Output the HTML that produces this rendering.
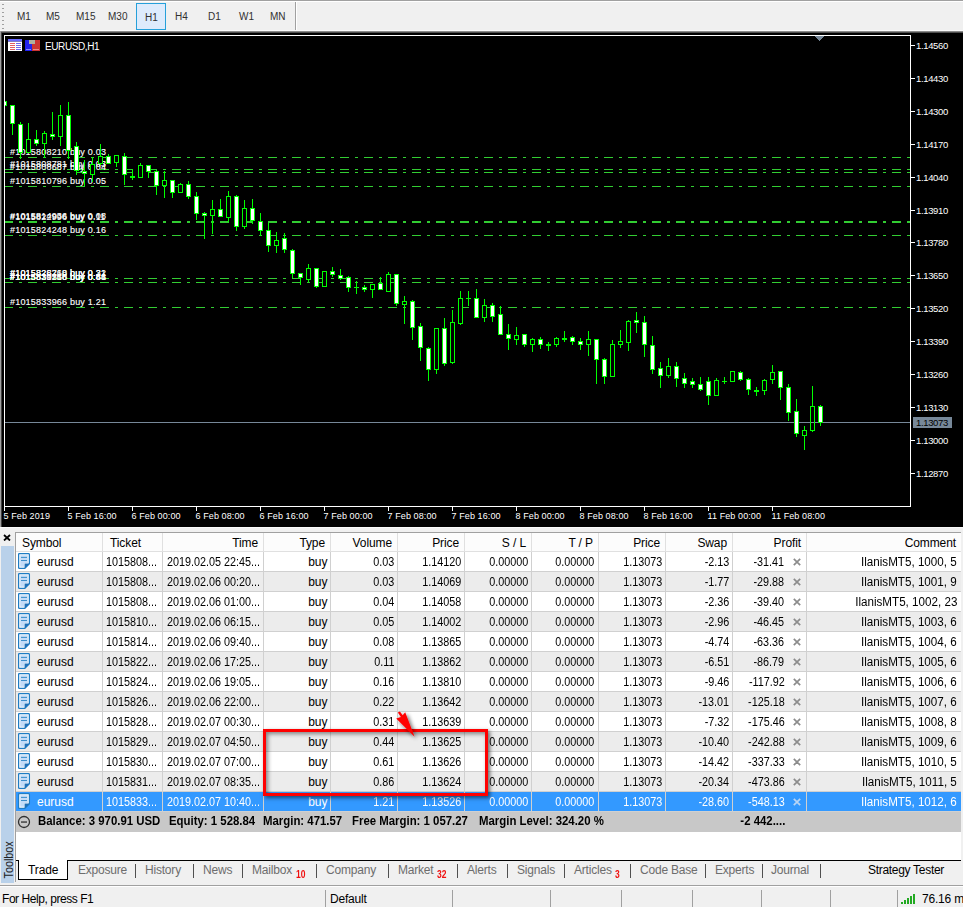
<!DOCTYPE html>
<html><head><meta charset="utf-8">
<style>
html,body{margin:0;padding:0;}
body{width:963px;height:907px;overflow:hidden;position:relative;background:#f0f0f0;font-family:"Liberation Sans",sans-serif;}
.abs{position:absolute;}
.tf{position:absolute;top:11px;font-size:10px;color:#303030;letter-spacing:0px;white-space:nowrap;}
svg text{font-family:"Liberation Sans",sans-serif;}
.lbl{font-size:9px;fill:#fff;letter-spacing:0.2px;stroke:#fff;stroke-width:0.12px;}
.ax{font-size:9.5px;fill:#fff;letter-spacing:-0.35px;}
.tx{font-size:9px;fill:#fff;letter-spacing:0.1px;}
.ttl{font-size:10px;fill:#fff;letter-spacing:-0.4px;}
.hdr{font-size:12px;color:#000;white-space:nowrap;letter-spacing:-0.1px;}
.cell{font-size:12px;white-space:nowrap;letter-spacing:-0.3px;}
.num{font-size:11px;white-space:nowrap;letter-spacing:-0.2px;}
.bal{font-size:11px;font-weight:bold;color:#000;white-space:nowrap;letter-spacing:0.25px;}
.xg{font-size:11px;font-weight:bold;}
.t12{font-size:12px;white-space:nowrap;}
.tab{position:absolute;top:863px;font-size:12px;color:#6d6d6d;letter-spacing:-0.2px;white-space:nowrap;}
.sep{position:absolute;top:864px;width:1px;height:14px;background:#505050;}
.sub{position:absolute;top:869px;font-size:10px;font-weight:bold;color:#f01010;transform:scaleX(0.85);transform-origin:0 0;}
.st{position:absolute;top:892px;font-size:12px;color:#000;letter-spacing:-0.45px;white-space:nowrap;}
.ssep{position:absolute;top:890px;width:1px;height:17px;background:#a0a0a0;}
</style></head><body>
<!-- toolbar -->
<div class="abs" style="left:0;top:0;width:963px;height:1px;background:#a0a0a0"></div>
<div class="abs" style="left:0;top:1px;width:963px;height:1px;background:#fff"></div>
<div class="abs" style="left:0;top:30px;width:963px;height:1px;background:#fafafa"></div>
<div class="abs" style="left:0;top:31px;width:963px;height:2px;background:linear-gradient(#a8a8a8,#303030)"></div>
<div class="abs" style="left:2px;top:4px;width:2px;height:25px;background:repeating-linear-gradient(#a0a0a0 0 1px,transparent 1px 4px)"></div>
<div class="abs" style="left:136px;top:3px;width:28px;height:25px;border:1px solid #26a0da;background:#ddebfc"></div>
<div class="abs" style="left:295px;top:2px;width:1px;height:28px;background:#a0a0a0"></div>
<div class="abs" style="left:296px;top:2px;width:1px;height:28px;background:#fff"></div>
<div class="tf" style="left:17px">M1</div>
<div class="tf" style="left:46px">M5</div>
<div class="tf" style="left:76px">M15</div>
<div class="tf" style="left:108px">M30</div>
<div class="tf" style="left:145px;top:12px">H1</div>
<div class="tf" style="left:175px">H4</div>
<div class="tf" style="left:208px">D1</div>
<div class="tf" style="left:239px">W1</div>
<div class="tf" style="left:270px">MN</div>
<!-- chart -->
<div class="abs" style="left:0;top:31px;width:1px;height:496px;background:#a0a0a0"></div>
<div class="abs" style="left:1px;top:33px;width:1px;height:494px;background:#404040"></div>
<svg class="abs" style="left:0;top:0" width="963" height="527" shape-rendering="crispEdges">
<defs><clipPath id="cp"><rect x="5" y="36" width="905" height="470"/></clipPath></defs>
<rect x="2" y="33" width="961" height="494" fill="#000"/>
<rect x="4" y="35" width="907" height="1" fill="#fff"/>
<rect x="4" y="506" width="907" height="1" fill="#fff"/>
<rect x="4" y="35" width="1" height="472" fill="#fff"/>
<rect x="910" y="35" width="1" height="472" fill="#fff"/>
<g clip-path="url(#cp)">
<g fill="#32cd32"><rect x="4" y="157" width="9" height="1"/><rect x="19" y="157" width="3" height="1"/><rect x="28" y="157" width="9" height="1"/><rect x="43" y="157" width="3" height="1"/><rect x="52" y="157" width="9" height="1"/><rect x="67" y="157" width="3" height="1"/><rect x="76" y="157" width="9" height="1"/><rect x="91" y="157" width="3" height="1"/><rect x="100" y="157" width="9" height="1"/><rect x="115" y="157" width="3" height="1"/><rect x="124" y="157" width="9" height="1"/><rect x="139" y="157" width="3" height="1"/><rect x="148" y="157" width="9" height="1"/><rect x="163" y="157" width="3" height="1"/><rect x="172" y="157" width="9" height="1"/><rect x="187" y="157" width="3" height="1"/><rect x="196" y="157" width="9" height="1"/><rect x="211" y="157" width="3" height="1"/><rect x="220" y="157" width="9" height="1"/><rect x="235" y="157" width="3" height="1"/><rect x="244" y="157" width="9" height="1"/><rect x="259" y="157" width="3" height="1"/><rect x="268" y="157" width="9" height="1"/><rect x="283" y="157" width="3" height="1"/><rect x="292" y="157" width="9" height="1"/><rect x="307" y="157" width="3" height="1"/><rect x="316" y="157" width="9" height="1"/><rect x="331" y="157" width="3" height="1"/><rect x="340" y="157" width="9" height="1"/><rect x="355" y="157" width="3" height="1"/><rect x="364" y="157" width="9" height="1"/><rect x="379" y="157" width="3" height="1"/><rect x="388" y="157" width="9" height="1"/><rect x="403" y="157" width="3" height="1"/><rect x="412" y="157" width="9" height="1"/><rect x="427" y="157" width="3" height="1"/><rect x="436" y="157" width="9" height="1"/><rect x="451" y="157" width="3" height="1"/><rect x="460" y="157" width="9" height="1"/><rect x="475" y="157" width="3" height="1"/><rect x="484" y="157" width="9" height="1"/><rect x="499" y="157" width="3" height="1"/><rect x="508" y="157" width="9" height="1"/><rect x="523" y="157" width="3" height="1"/><rect x="532" y="157" width="9" height="1"/><rect x="547" y="157" width="3" height="1"/><rect x="556" y="157" width="9" height="1"/><rect x="571" y="157" width="3" height="1"/><rect x="580" y="157" width="9" height="1"/><rect x="595" y="157" width="3" height="1"/><rect x="604" y="157" width="9" height="1"/><rect x="619" y="157" width="3" height="1"/><rect x="628" y="157" width="9" height="1"/><rect x="643" y="157" width="3" height="1"/><rect x="652" y="157" width="9" height="1"/><rect x="667" y="157" width="3" height="1"/><rect x="676" y="157" width="9" height="1"/><rect x="691" y="157" width="3" height="1"/><rect x="700" y="157" width="9" height="1"/><rect x="715" y="157" width="3" height="1"/><rect x="724" y="157" width="9" height="1"/><rect x="739" y="157" width="3" height="1"/><rect x="748" y="157" width="9" height="1"/><rect x="763" y="157" width="3" height="1"/><rect x="772" y="157" width="9" height="1"/><rect x="787" y="157" width="3" height="1"/><rect x="796" y="157" width="9" height="1"/><rect x="811" y="157" width="3" height="1"/><rect x="820" y="157" width="9" height="1"/><rect x="835" y="157" width="3" height="1"/><rect x="844" y="157" width="9" height="1"/><rect x="859" y="157" width="3" height="1"/><rect x="868" y="157" width="9" height="1"/><rect x="883" y="157" width="3" height="1"/><rect x="892" y="157" width="9" height="1"/><rect x="907" y="157" width="3" height="1"/></g>
<g fill="#32cd32"><rect x="4" y="169" width="9" height="1"/><rect x="19" y="169" width="3" height="1"/><rect x="28" y="169" width="9" height="1"/><rect x="43" y="169" width="3" height="1"/><rect x="52" y="169" width="9" height="1"/><rect x="67" y="169" width="3" height="1"/><rect x="76" y="169" width="9" height="1"/><rect x="91" y="169" width="3" height="1"/><rect x="100" y="169" width="9" height="1"/><rect x="115" y="169" width="3" height="1"/><rect x="124" y="169" width="9" height="1"/><rect x="139" y="169" width="3" height="1"/><rect x="148" y="169" width="9" height="1"/><rect x="163" y="169" width="3" height="1"/><rect x="172" y="169" width="9" height="1"/><rect x="187" y="169" width="3" height="1"/><rect x="196" y="169" width="9" height="1"/><rect x="211" y="169" width="3" height="1"/><rect x="220" y="169" width="9" height="1"/><rect x="235" y="169" width="3" height="1"/><rect x="244" y="169" width="9" height="1"/><rect x="259" y="169" width="3" height="1"/><rect x="268" y="169" width="9" height="1"/><rect x="283" y="169" width="3" height="1"/><rect x="292" y="169" width="9" height="1"/><rect x="307" y="169" width="3" height="1"/><rect x="316" y="169" width="9" height="1"/><rect x="331" y="169" width="3" height="1"/><rect x="340" y="169" width="9" height="1"/><rect x="355" y="169" width="3" height="1"/><rect x="364" y="169" width="9" height="1"/><rect x="379" y="169" width="3" height="1"/><rect x="388" y="169" width="9" height="1"/><rect x="403" y="169" width="3" height="1"/><rect x="412" y="169" width="9" height="1"/><rect x="427" y="169" width="3" height="1"/><rect x="436" y="169" width="9" height="1"/><rect x="451" y="169" width="3" height="1"/><rect x="460" y="169" width="9" height="1"/><rect x="475" y="169" width="3" height="1"/><rect x="484" y="169" width="9" height="1"/><rect x="499" y="169" width="3" height="1"/><rect x="508" y="169" width="9" height="1"/><rect x="523" y="169" width="3" height="1"/><rect x="532" y="169" width="9" height="1"/><rect x="547" y="169" width="3" height="1"/><rect x="556" y="169" width="9" height="1"/><rect x="571" y="169" width="3" height="1"/><rect x="580" y="169" width="9" height="1"/><rect x="595" y="169" width="3" height="1"/><rect x="604" y="169" width="9" height="1"/><rect x="619" y="169" width="3" height="1"/><rect x="628" y="169" width="9" height="1"/><rect x="643" y="169" width="3" height="1"/><rect x="652" y="169" width="9" height="1"/><rect x="667" y="169" width="3" height="1"/><rect x="676" y="169" width="9" height="1"/><rect x="691" y="169" width="3" height="1"/><rect x="700" y="169" width="9" height="1"/><rect x="715" y="169" width="3" height="1"/><rect x="724" y="169" width="9" height="1"/><rect x="739" y="169" width="3" height="1"/><rect x="748" y="169" width="9" height="1"/><rect x="763" y="169" width="3" height="1"/><rect x="772" y="169" width="9" height="1"/><rect x="787" y="169" width="3" height="1"/><rect x="796" y="169" width="9" height="1"/><rect x="811" y="169" width="3" height="1"/><rect x="820" y="169" width="9" height="1"/><rect x="835" y="169" width="3" height="1"/><rect x="844" y="169" width="9" height="1"/><rect x="859" y="169" width="3" height="1"/><rect x="868" y="169" width="9" height="1"/><rect x="883" y="169" width="3" height="1"/><rect x="892" y="169" width="9" height="1"/><rect x="907" y="169" width="3" height="1"/></g>
<g fill="#32cd32"><rect x="4" y="172" width="9" height="1"/><rect x="19" y="172" width="3" height="1"/><rect x="28" y="172" width="9" height="1"/><rect x="43" y="172" width="3" height="1"/><rect x="52" y="172" width="9" height="1"/><rect x="67" y="172" width="3" height="1"/><rect x="76" y="172" width="9" height="1"/><rect x="91" y="172" width="3" height="1"/><rect x="100" y="172" width="9" height="1"/><rect x="115" y="172" width="3" height="1"/><rect x="124" y="172" width="9" height="1"/><rect x="139" y="172" width="3" height="1"/><rect x="148" y="172" width="9" height="1"/><rect x="163" y="172" width="3" height="1"/><rect x="172" y="172" width="9" height="1"/><rect x="187" y="172" width="3" height="1"/><rect x="196" y="172" width="9" height="1"/><rect x="211" y="172" width="3" height="1"/><rect x="220" y="172" width="9" height="1"/><rect x="235" y="172" width="3" height="1"/><rect x="244" y="172" width="9" height="1"/><rect x="259" y="172" width="3" height="1"/><rect x="268" y="172" width="9" height="1"/><rect x="283" y="172" width="3" height="1"/><rect x="292" y="172" width="9" height="1"/><rect x="307" y="172" width="3" height="1"/><rect x="316" y="172" width="9" height="1"/><rect x="331" y="172" width="3" height="1"/><rect x="340" y="172" width="9" height="1"/><rect x="355" y="172" width="3" height="1"/><rect x="364" y="172" width="9" height="1"/><rect x="379" y="172" width="3" height="1"/><rect x="388" y="172" width="9" height="1"/><rect x="403" y="172" width="3" height="1"/><rect x="412" y="172" width="9" height="1"/><rect x="427" y="172" width="3" height="1"/><rect x="436" y="172" width="9" height="1"/><rect x="451" y="172" width="3" height="1"/><rect x="460" y="172" width="9" height="1"/><rect x="475" y="172" width="3" height="1"/><rect x="484" y="172" width="9" height="1"/><rect x="499" y="172" width="3" height="1"/><rect x="508" y="172" width="9" height="1"/><rect x="523" y="172" width="3" height="1"/><rect x="532" y="172" width="9" height="1"/><rect x="547" y="172" width="3" height="1"/><rect x="556" y="172" width="9" height="1"/><rect x="571" y="172" width="3" height="1"/><rect x="580" y="172" width="9" height="1"/><rect x="595" y="172" width="3" height="1"/><rect x="604" y="172" width="9" height="1"/><rect x="619" y="172" width="3" height="1"/><rect x="628" y="172" width="9" height="1"/><rect x="643" y="172" width="3" height="1"/><rect x="652" y="172" width="9" height="1"/><rect x="667" y="172" width="3" height="1"/><rect x="676" y="172" width="9" height="1"/><rect x="691" y="172" width="3" height="1"/><rect x="700" y="172" width="9" height="1"/><rect x="715" y="172" width="3" height="1"/><rect x="724" y="172" width="9" height="1"/><rect x="739" y="172" width="3" height="1"/><rect x="748" y="172" width="9" height="1"/><rect x="763" y="172" width="3" height="1"/><rect x="772" y="172" width="9" height="1"/><rect x="787" y="172" width="3" height="1"/><rect x="796" y="172" width="9" height="1"/><rect x="811" y="172" width="3" height="1"/><rect x="820" y="172" width="9" height="1"/><rect x="835" y="172" width="3" height="1"/><rect x="844" y="172" width="9" height="1"/><rect x="859" y="172" width="3" height="1"/><rect x="868" y="172" width="9" height="1"/><rect x="883" y="172" width="3" height="1"/><rect x="892" y="172" width="9" height="1"/><rect x="907" y="172" width="3" height="1"/></g>
<g fill="#32cd32"><rect x="4" y="186" width="9" height="1"/><rect x="19" y="186" width="3" height="1"/><rect x="28" y="186" width="9" height="1"/><rect x="43" y="186" width="3" height="1"/><rect x="52" y="186" width="9" height="1"/><rect x="67" y="186" width="3" height="1"/><rect x="76" y="186" width="9" height="1"/><rect x="91" y="186" width="3" height="1"/><rect x="100" y="186" width="9" height="1"/><rect x="115" y="186" width="3" height="1"/><rect x="124" y="186" width="9" height="1"/><rect x="139" y="186" width="3" height="1"/><rect x="148" y="186" width="9" height="1"/><rect x="163" y="186" width="3" height="1"/><rect x="172" y="186" width="9" height="1"/><rect x="187" y="186" width="3" height="1"/><rect x="196" y="186" width="9" height="1"/><rect x="211" y="186" width="3" height="1"/><rect x="220" y="186" width="9" height="1"/><rect x="235" y="186" width="3" height="1"/><rect x="244" y="186" width="9" height="1"/><rect x="259" y="186" width="3" height="1"/><rect x="268" y="186" width="9" height="1"/><rect x="283" y="186" width="3" height="1"/><rect x="292" y="186" width="9" height="1"/><rect x="307" y="186" width="3" height="1"/><rect x="316" y="186" width="9" height="1"/><rect x="331" y="186" width="3" height="1"/><rect x="340" y="186" width="9" height="1"/><rect x="355" y="186" width="3" height="1"/><rect x="364" y="186" width="9" height="1"/><rect x="379" y="186" width="3" height="1"/><rect x="388" y="186" width="9" height="1"/><rect x="403" y="186" width="3" height="1"/><rect x="412" y="186" width="9" height="1"/><rect x="427" y="186" width="3" height="1"/><rect x="436" y="186" width="9" height="1"/><rect x="451" y="186" width="3" height="1"/><rect x="460" y="186" width="9" height="1"/><rect x="475" y="186" width="3" height="1"/><rect x="484" y="186" width="9" height="1"/><rect x="499" y="186" width="3" height="1"/><rect x="508" y="186" width="9" height="1"/><rect x="523" y="186" width="3" height="1"/><rect x="532" y="186" width="9" height="1"/><rect x="547" y="186" width="3" height="1"/><rect x="556" y="186" width="9" height="1"/><rect x="571" y="186" width="3" height="1"/><rect x="580" y="186" width="9" height="1"/><rect x="595" y="186" width="3" height="1"/><rect x="604" y="186" width="9" height="1"/><rect x="619" y="186" width="3" height="1"/><rect x="628" y="186" width="9" height="1"/><rect x="643" y="186" width="3" height="1"/><rect x="652" y="186" width="9" height="1"/><rect x="667" y="186" width="3" height="1"/><rect x="676" y="186" width="9" height="1"/><rect x="691" y="186" width="3" height="1"/><rect x="700" y="186" width="9" height="1"/><rect x="715" y="186" width="3" height="1"/><rect x="724" y="186" width="9" height="1"/><rect x="739" y="186" width="3" height="1"/><rect x="748" y="186" width="9" height="1"/><rect x="763" y="186" width="3" height="1"/><rect x="772" y="186" width="9" height="1"/><rect x="787" y="186" width="3" height="1"/><rect x="796" y="186" width="9" height="1"/><rect x="811" y="186" width="3" height="1"/><rect x="820" y="186" width="9" height="1"/><rect x="835" y="186" width="3" height="1"/><rect x="844" y="186" width="9" height="1"/><rect x="859" y="186" width="3" height="1"/><rect x="868" y="186" width="9" height="1"/><rect x="883" y="186" width="3" height="1"/><rect x="892" y="186" width="9" height="1"/><rect x="907" y="186" width="3" height="1"/></g>
<g fill="#32cd32"><rect x="4" y="221" width="9" height="1"/><rect x="19" y="221" width="3" height="1"/><rect x="28" y="221" width="9" height="1"/><rect x="43" y="221" width="3" height="1"/><rect x="52" y="221" width="9" height="1"/><rect x="67" y="221" width="3" height="1"/><rect x="76" y="221" width="9" height="1"/><rect x="91" y="221" width="3" height="1"/><rect x="100" y="221" width="9" height="1"/><rect x="115" y="221" width="3" height="1"/><rect x="124" y="221" width="9" height="1"/><rect x="139" y="221" width="3" height="1"/><rect x="148" y="221" width="9" height="1"/><rect x="163" y="221" width="3" height="1"/><rect x="172" y="221" width="9" height="1"/><rect x="187" y="221" width="3" height="1"/><rect x="196" y="221" width="9" height="1"/><rect x="211" y="221" width="3" height="1"/><rect x="220" y="221" width="9" height="1"/><rect x="235" y="221" width="3" height="1"/><rect x="244" y="221" width="9" height="1"/><rect x="259" y="221" width="3" height="1"/><rect x="268" y="221" width="9" height="1"/><rect x="283" y="221" width="3" height="1"/><rect x="292" y="221" width="9" height="1"/><rect x="307" y="221" width="3" height="1"/><rect x="316" y="221" width="9" height="1"/><rect x="331" y="221" width="3" height="1"/><rect x="340" y="221" width="9" height="1"/><rect x="355" y="221" width="3" height="1"/><rect x="364" y="221" width="9" height="1"/><rect x="379" y="221" width="3" height="1"/><rect x="388" y="221" width="9" height="1"/><rect x="403" y="221" width="3" height="1"/><rect x="412" y="221" width="9" height="1"/><rect x="427" y="221" width="3" height="1"/><rect x="436" y="221" width="9" height="1"/><rect x="451" y="221" width="3" height="1"/><rect x="460" y="221" width="9" height="1"/><rect x="475" y="221" width="3" height="1"/><rect x="484" y="221" width="9" height="1"/><rect x="499" y="221" width="3" height="1"/><rect x="508" y="221" width="9" height="1"/><rect x="523" y="221" width="3" height="1"/><rect x="532" y="221" width="9" height="1"/><rect x="547" y="221" width="3" height="1"/><rect x="556" y="221" width="9" height="1"/><rect x="571" y="221" width="3" height="1"/><rect x="580" y="221" width="9" height="1"/><rect x="595" y="221" width="3" height="1"/><rect x="604" y="221" width="9" height="1"/><rect x="619" y="221" width="3" height="1"/><rect x="628" y="221" width="9" height="1"/><rect x="643" y="221" width="3" height="1"/><rect x="652" y="221" width="9" height="1"/><rect x="667" y="221" width="3" height="1"/><rect x="676" y="221" width="9" height="1"/><rect x="691" y="221" width="3" height="1"/><rect x="700" y="221" width="9" height="1"/><rect x="715" y="221" width="3" height="1"/><rect x="724" y="221" width="9" height="1"/><rect x="739" y="221" width="3" height="1"/><rect x="748" y="221" width="9" height="1"/><rect x="763" y="221" width="3" height="1"/><rect x="772" y="221" width="9" height="1"/><rect x="787" y="221" width="3" height="1"/><rect x="796" y="221" width="9" height="1"/><rect x="811" y="221" width="3" height="1"/><rect x="820" y="221" width="9" height="1"/><rect x="835" y="221" width="3" height="1"/><rect x="844" y="221" width="9" height="1"/><rect x="859" y="221" width="3" height="1"/><rect x="868" y="221" width="9" height="1"/><rect x="883" y="221" width="3" height="1"/><rect x="892" y="221" width="9" height="1"/><rect x="907" y="221" width="3" height="1"/></g>
<g fill="#32cd32"><rect x="4" y="222" width="9" height="1"/><rect x="19" y="222" width="3" height="1"/><rect x="28" y="222" width="9" height="1"/><rect x="43" y="222" width="3" height="1"/><rect x="52" y="222" width="9" height="1"/><rect x="67" y="222" width="3" height="1"/><rect x="76" y="222" width="9" height="1"/><rect x="91" y="222" width="3" height="1"/><rect x="100" y="222" width="9" height="1"/><rect x="115" y="222" width="3" height="1"/><rect x="124" y="222" width="9" height="1"/><rect x="139" y="222" width="3" height="1"/><rect x="148" y="222" width="9" height="1"/><rect x="163" y="222" width="3" height="1"/><rect x="172" y="222" width="9" height="1"/><rect x="187" y="222" width="3" height="1"/><rect x="196" y="222" width="9" height="1"/><rect x="211" y="222" width="3" height="1"/><rect x="220" y="222" width="9" height="1"/><rect x="235" y="222" width="3" height="1"/><rect x="244" y="222" width="9" height="1"/><rect x="259" y="222" width="3" height="1"/><rect x="268" y="222" width="9" height="1"/><rect x="283" y="222" width="3" height="1"/><rect x="292" y="222" width="9" height="1"/><rect x="307" y="222" width="3" height="1"/><rect x="316" y="222" width="9" height="1"/><rect x="331" y="222" width="3" height="1"/><rect x="340" y="222" width="9" height="1"/><rect x="355" y="222" width="3" height="1"/><rect x="364" y="222" width="9" height="1"/><rect x="379" y="222" width="3" height="1"/><rect x="388" y="222" width="9" height="1"/><rect x="403" y="222" width="3" height="1"/><rect x="412" y="222" width="9" height="1"/><rect x="427" y="222" width="3" height="1"/><rect x="436" y="222" width="9" height="1"/><rect x="451" y="222" width="3" height="1"/><rect x="460" y="222" width="9" height="1"/><rect x="475" y="222" width="3" height="1"/><rect x="484" y="222" width="9" height="1"/><rect x="499" y="222" width="3" height="1"/><rect x="508" y="222" width="9" height="1"/><rect x="523" y="222" width="3" height="1"/><rect x="532" y="222" width="9" height="1"/><rect x="547" y="222" width="3" height="1"/><rect x="556" y="222" width="9" height="1"/><rect x="571" y="222" width="3" height="1"/><rect x="580" y="222" width="9" height="1"/><rect x="595" y="222" width="3" height="1"/><rect x="604" y="222" width="9" height="1"/><rect x="619" y="222" width="3" height="1"/><rect x="628" y="222" width="9" height="1"/><rect x="643" y="222" width="3" height="1"/><rect x="652" y="222" width="9" height="1"/><rect x="667" y="222" width="3" height="1"/><rect x="676" y="222" width="9" height="1"/><rect x="691" y="222" width="3" height="1"/><rect x="700" y="222" width="9" height="1"/><rect x="715" y="222" width="3" height="1"/><rect x="724" y="222" width="9" height="1"/><rect x="739" y="222" width="3" height="1"/><rect x="748" y="222" width="9" height="1"/><rect x="763" y="222" width="3" height="1"/><rect x="772" y="222" width="9" height="1"/><rect x="787" y="222" width="3" height="1"/><rect x="796" y="222" width="9" height="1"/><rect x="811" y="222" width="3" height="1"/><rect x="820" y="222" width="9" height="1"/><rect x="835" y="222" width="3" height="1"/><rect x="844" y="222" width="9" height="1"/><rect x="859" y="222" width="3" height="1"/><rect x="868" y="222" width="9" height="1"/><rect x="883" y="222" width="3" height="1"/><rect x="892" y="222" width="9" height="1"/><rect x="907" y="222" width="3" height="1"/></g>
<g fill="#32cd32"><rect x="4" y="235" width="9" height="1"/><rect x="19" y="235" width="3" height="1"/><rect x="28" y="235" width="9" height="1"/><rect x="43" y="235" width="3" height="1"/><rect x="52" y="235" width="9" height="1"/><rect x="67" y="235" width="3" height="1"/><rect x="76" y="235" width="9" height="1"/><rect x="91" y="235" width="3" height="1"/><rect x="100" y="235" width="9" height="1"/><rect x="115" y="235" width="3" height="1"/><rect x="124" y="235" width="9" height="1"/><rect x="139" y="235" width="3" height="1"/><rect x="148" y="235" width="9" height="1"/><rect x="163" y="235" width="3" height="1"/><rect x="172" y="235" width="9" height="1"/><rect x="187" y="235" width="3" height="1"/><rect x="196" y="235" width="9" height="1"/><rect x="211" y="235" width="3" height="1"/><rect x="220" y="235" width="9" height="1"/><rect x="235" y="235" width="3" height="1"/><rect x="244" y="235" width="9" height="1"/><rect x="259" y="235" width="3" height="1"/><rect x="268" y="235" width="9" height="1"/><rect x="283" y="235" width="3" height="1"/><rect x="292" y="235" width="9" height="1"/><rect x="307" y="235" width="3" height="1"/><rect x="316" y="235" width="9" height="1"/><rect x="331" y="235" width="3" height="1"/><rect x="340" y="235" width="9" height="1"/><rect x="355" y="235" width="3" height="1"/><rect x="364" y="235" width="9" height="1"/><rect x="379" y="235" width="3" height="1"/><rect x="388" y="235" width="9" height="1"/><rect x="403" y="235" width="3" height="1"/><rect x="412" y="235" width="9" height="1"/><rect x="427" y="235" width="3" height="1"/><rect x="436" y="235" width="9" height="1"/><rect x="451" y="235" width="3" height="1"/><rect x="460" y="235" width="9" height="1"/><rect x="475" y="235" width="3" height="1"/><rect x="484" y="235" width="9" height="1"/><rect x="499" y="235" width="3" height="1"/><rect x="508" y="235" width="9" height="1"/><rect x="523" y="235" width="3" height="1"/><rect x="532" y="235" width="9" height="1"/><rect x="547" y="235" width="3" height="1"/><rect x="556" y="235" width="9" height="1"/><rect x="571" y="235" width="3" height="1"/><rect x="580" y="235" width="9" height="1"/><rect x="595" y="235" width="3" height="1"/><rect x="604" y="235" width="9" height="1"/><rect x="619" y="235" width="3" height="1"/><rect x="628" y="235" width="9" height="1"/><rect x="643" y="235" width="3" height="1"/><rect x="652" y="235" width="9" height="1"/><rect x="667" y="235" width="3" height="1"/><rect x="676" y="235" width="9" height="1"/><rect x="691" y="235" width="3" height="1"/><rect x="700" y="235" width="9" height="1"/><rect x="715" y="235" width="3" height="1"/><rect x="724" y="235" width="9" height="1"/><rect x="739" y="235" width="3" height="1"/><rect x="748" y="235" width="9" height="1"/><rect x="763" y="235" width="3" height="1"/><rect x="772" y="235" width="9" height="1"/><rect x="787" y="235" width="3" height="1"/><rect x="796" y="235" width="9" height="1"/><rect x="811" y="235" width="3" height="1"/><rect x="820" y="235" width="9" height="1"/><rect x="835" y="235" width="3" height="1"/><rect x="844" y="235" width="9" height="1"/><rect x="859" y="235" width="3" height="1"/><rect x="868" y="235" width="9" height="1"/><rect x="883" y="235" width="3" height="1"/><rect x="892" y="235" width="9" height="1"/><rect x="907" y="235" width="3" height="1"/></g>
<g fill="#32cd32"><rect x="4" y="278" width="9" height="1"/><rect x="19" y="278" width="3" height="1"/><rect x="28" y="278" width="9" height="1"/><rect x="43" y="278" width="3" height="1"/><rect x="52" y="278" width="9" height="1"/><rect x="67" y="278" width="3" height="1"/><rect x="76" y="278" width="9" height="1"/><rect x="91" y="278" width="3" height="1"/><rect x="100" y="278" width="9" height="1"/><rect x="115" y="278" width="3" height="1"/><rect x="124" y="278" width="9" height="1"/><rect x="139" y="278" width="3" height="1"/><rect x="148" y="278" width="9" height="1"/><rect x="163" y="278" width="3" height="1"/><rect x="172" y="278" width="9" height="1"/><rect x="187" y="278" width="3" height="1"/><rect x="196" y="278" width="9" height="1"/><rect x="211" y="278" width="3" height="1"/><rect x="220" y="278" width="9" height="1"/><rect x="235" y="278" width="3" height="1"/><rect x="244" y="278" width="9" height="1"/><rect x="259" y="278" width="3" height="1"/><rect x="268" y="278" width="9" height="1"/><rect x="283" y="278" width="3" height="1"/><rect x="292" y="278" width="9" height="1"/><rect x="307" y="278" width="3" height="1"/><rect x="316" y="278" width="9" height="1"/><rect x="331" y="278" width="3" height="1"/><rect x="340" y="278" width="9" height="1"/><rect x="355" y="278" width="3" height="1"/><rect x="364" y="278" width="9" height="1"/><rect x="379" y="278" width="3" height="1"/><rect x="388" y="278" width="9" height="1"/><rect x="403" y="278" width="3" height="1"/><rect x="412" y="278" width="9" height="1"/><rect x="427" y="278" width="3" height="1"/><rect x="436" y="278" width="9" height="1"/><rect x="451" y="278" width="3" height="1"/><rect x="460" y="278" width="9" height="1"/><rect x="475" y="278" width="3" height="1"/><rect x="484" y="278" width="9" height="1"/><rect x="499" y="278" width="3" height="1"/><rect x="508" y="278" width="9" height="1"/><rect x="523" y="278" width="3" height="1"/><rect x="532" y="278" width="9" height="1"/><rect x="547" y="278" width="3" height="1"/><rect x="556" y="278" width="9" height="1"/><rect x="571" y="278" width="3" height="1"/><rect x="580" y="278" width="9" height="1"/><rect x="595" y="278" width="3" height="1"/><rect x="604" y="278" width="9" height="1"/><rect x="619" y="278" width="3" height="1"/><rect x="628" y="278" width="9" height="1"/><rect x="643" y="278" width="3" height="1"/><rect x="652" y="278" width="9" height="1"/><rect x="667" y="278" width="3" height="1"/><rect x="676" y="278" width="9" height="1"/><rect x="691" y="278" width="3" height="1"/><rect x="700" y="278" width="9" height="1"/><rect x="715" y="278" width="3" height="1"/><rect x="724" y="278" width="9" height="1"/><rect x="739" y="278" width="3" height="1"/><rect x="748" y="278" width="9" height="1"/><rect x="763" y="278" width="3" height="1"/><rect x="772" y="278" width="9" height="1"/><rect x="787" y="278" width="3" height="1"/><rect x="796" y="278" width="9" height="1"/><rect x="811" y="278" width="3" height="1"/><rect x="820" y="278" width="9" height="1"/><rect x="835" y="278" width="3" height="1"/><rect x="844" y="278" width="9" height="1"/><rect x="859" y="278" width="3" height="1"/><rect x="868" y="278" width="9" height="1"/><rect x="883" y="278" width="3" height="1"/><rect x="892" y="278" width="9" height="1"/><rect x="907" y="278" width="3" height="1"/></g>
<g fill="#32cd32"><rect x="4" y="282" width="9" height="1"/><rect x="19" y="282" width="3" height="1"/><rect x="28" y="282" width="9" height="1"/><rect x="43" y="282" width="3" height="1"/><rect x="52" y="282" width="9" height="1"/><rect x="67" y="282" width="3" height="1"/><rect x="76" y="282" width="9" height="1"/><rect x="91" y="282" width="3" height="1"/><rect x="100" y="282" width="9" height="1"/><rect x="115" y="282" width="3" height="1"/><rect x="124" y="282" width="9" height="1"/><rect x="139" y="282" width="3" height="1"/><rect x="148" y="282" width="9" height="1"/><rect x="163" y="282" width="3" height="1"/><rect x="172" y="282" width="9" height="1"/><rect x="187" y="282" width="3" height="1"/><rect x="196" y="282" width="9" height="1"/><rect x="211" y="282" width="3" height="1"/><rect x="220" y="282" width="9" height="1"/><rect x="235" y="282" width="3" height="1"/><rect x="244" y="282" width="9" height="1"/><rect x="259" y="282" width="3" height="1"/><rect x="268" y="282" width="9" height="1"/><rect x="283" y="282" width="3" height="1"/><rect x="292" y="282" width="9" height="1"/><rect x="307" y="282" width="3" height="1"/><rect x="316" y="282" width="9" height="1"/><rect x="331" y="282" width="3" height="1"/><rect x="340" y="282" width="9" height="1"/><rect x="355" y="282" width="3" height="1"/><rect x="364" y="282" width="9" height="1"/><rect x="379" y="282" width="3" height="1"/><rect x="388" y="282" width="9" height="1"/><rect x="403" y="282" width="3" height="1"/><rect x="412" y="282" width="9" height="1"/><rect x="427" y="282" width="3" height="1"/><rect x="436" y="282" width="9" height="1"/><rect x="451" y="282" width="3" height="1"/><rect x="460" y="282" width="9" height="1"/><rect x="475" y="282" width="3" height="1"/><rect x="484" y="282" width="9" height="1"/><rect x="499" y="282" width="3" height="1"/><rect x="508" y="282" width="9" height="1"/><rect x="523" y="282" width="3" height="1"/><rect x="532" y="282" width="9" height="1"/><rect x="547" y="282" width="3" height="1"/><rect x="556" y="282" width="9" height="1"/><rect x="571" y="282" width="3" height="1"/><rect x="580" y="282" width="9" height="1"/><rect x="595" y="282" width="3" height="1"/><rect x="604" y="282" width="9" height="1"/><rect x="619" y="282" width="3" height="1"/><rect x="628" y="282" width="9" height="1"/><rect x="643" y="282" width="3" height="1"/><rect x="652" y="282" width="9" height="1"/><rect x="667" y="282" width="3" height="1"/><rect x="676" y="282" width="9" height="1"/><rect x="691" y="282" width="3" height="1"/><rect x="700" y="282" width="9" height="1"/><rect x="715" y="282" width="3" height="1"/><rect x="724" y="282" width="9" height="1"/><rect x="739" y="282" width="3" height="1"/><rect x="748" y="282" width="9" height="1"/><rect x="763" y="282" width="3" height="1"/><rect x="772" y="282" width="9" height="1"/><rect x="787" y="282" width="3" height="1"/><rect x="796" y="282" width="9" height="1"/><rect x="811" y="282" width="3" height="1"/><rect x="820" y="282" width="9" height="1"/><rect x="835" y="282" width="3" height="1"/><rect x="844" y="282" width="9" height="1"/><rect x="859" y="282" width="3" height="1"/><rect x="868" y="282" width="9" height="1"/><rect x="883" y="282" width="3" height="1"/><rect x="892" y="282" width="9" height="1"/><rect x="907" y="282" width="3" height="1"/></g>
<g fill="#32cd32"><rect x="4" y="307" width="9" height="1"/><rect x="19" y="307" width="3" height="1"/><rect x="28" y="307" width="9" height="1"/><rect x="43" y="307" width="3" height="1"/><rect x="52" y="307" width="9" height="1"/><rect x="67" y="307" width="3" height="1"/><rect x="76" y="307" width="9" height="1"/><rect x="91" y="307" width="3" height="1"/><rect x="100" y="307" width="9" height="1"/><rect x="115" y="307" width="3" height="1"/><rect x="124" y="307" width="9" height="1"/><rect x="139" y="307" width="3" height="1"/><rect x="148" y="307" width="9" height="1"/><rect x="163" y="307" width="3" height="1"/><rect x="172" y="307" width="9" height="1"/><rect x="187" y="307" width="3" height="1"/><rect x="196" y="307" width="9" height="1"/><rect x="211" y="307" width="3" height="1"/><rect x="220" y="307" width="9" height="1"/><rect x="235" y="307" width="3" height="1"/><rect x="244" y="307" width="9" height="1"/><rect x="259" y="307" width="3" height="1"/><rect x="268" y="307" width="9" height="1"/><rect x="283" y="307" width="3" height="1"/><rect x="292" y="307" width="9" height="1"/><rect x="307" y="307" width="3" height="1"/><rect x="316" y="307" width="9" height="1"/><rect x="331" y="307" width="3" height="1"/><rect x="340" y="307" width="9" height="1"/><rect x="355" y="307" width="3" height="1"/><rect x="364" y="307" width="9" height="1"/><rect x="379" y="307" width="3" height="1"/><rect x="388" y="307" width="9" height="1"/><rect x="403" y="307" width="3" height="1"/><rect x="412" y="307" width="9" height="1"/><rect x="427" y="307" width="3" height="1"/><rect x="436" y="307" width="9" height="1"/><rect x="451" y="307" width="3" height="1"/><rect x="460" y="307" width="9" height="1"/><rect x="475" y="307" width="3" height="1"/><rect x="484" y="307" width="9" height="1"/><rect x="499" y="307" width="3" height="1"/><rect x="508" y="307" width="9" height="1"/><rect x="523" y="307" width="3" height="1"/><rect x="532" y="307" width="9" height="1"/><rect x="547" y="307" width="3" height="1"/><rect x="556" y="307" width="9" height="1"/><rect x="571" y="307" width="3" height="1"/><rect x="580" y="307" width="9" height="1"/><rect x="595" y="307" width="3" height="1"/><rect x="604" y="307" width="9" height="1"/><rect x="619" y="307" width="3" height="1"/><rect x="628" y="307" width="9" height="1"/><rect x="643" y="307" width="3" height="1"/><rect x="652" y="307" width="9" height="1"/><rect x="667" y="307" width="3" height="1"/><rect x="676" y="307" width="9" height="1"/><rect x="691" y="307" width="3" height="1"/><rect x="700" y="307" width="9" height="1"/><rect x="715" y="307" width="3" height="1"/><rect x="724" y="307" width="9" height="1"/><rect x="739" y="307" width="3" height="1"/><rect x="748" y="307" width="9" height="1"/><rect x="763" y="307" width="3" height="1"/><rect x="772" y="307" width="9" height="1"/><rect x="787" y="307" width="3" height="1"/><rect x="796" y="307" width="9" height="1"/><rect x="811" y="307" width="3" height="1"/><rect x="820" y="307" width="9" height="1"/><rect x="835" y="307" width="3" height="1"/><rect x="844" y="307" width="9" height="1"/><rect x="859" y="307" width="3" height="1"/><rect x="868" y="307" width="9" height="1"/><rect x="883" y="307" width="3" height="1"/><rect x="892" y="307" width="9" height="1"/><rect x="907" y="307" width="3" height="1"/></g>
<text x="10" y="155" class="lbl">#1015808210 buy 0.03</text>
<text x="10" y="167" class="lbl">#1015808781 buy 0.03</text>
<text x="10" y="170" class="lbl">#1015808687 buy 0.04</text>
<text x="10" y="184" class="lbl">#1015810796 buy 0.05</text>
<text x="10" y="219" class="lbl">#1015814936 buy 0.08</text>
<text x="10" y="220" class="lbl">#1015822996 buy 0.11</text>
<text x="10" y="233" class="lbl">#1015824248 buy 0.16</text>
<text x="10" y="276" class="lbl">#1015826760 buy 0.22</text>
<text x="10" y="276" class="lbl">#1015828218 buy 0.31</text>
<text x="10" y="280" class="lbl">#1015829760 buy 0.44</text>
<text x="10" y="280" class="lbl">#1015830218 buy 0.61</text>
<text x="10" y="280" class="lbl">#1015831556 buy 0.86</text>
<text x="10" y="305" class="lbl">#1015833966 buy 1.21</text>
<rect x="27" y="140" width="3" height="12" fill="#000"/>
<rect x="43" y="134" width="3" height="9" fill="#000"/>
<rect x="59" y="116" width="3" height="20" fill="#000"/>
<rect x="91" y="165" width="3" height="9" fill="#000"/>
<rect x="99" y="157" width="3" height="6" fill="#000"/>
<rect x="115" y="156" width="3" height="6" fill="#000"/>
<rect x="139" y="166" width="3" height="11" fill="#000"/>
<rect x="163" y="181" width="3" height="4" fill="#000"/>
<rect x="179" y="185" width="3" height="7" fill="#000"/>
<rect x="211" y="210" width="3" height="5" fill="#000"/>
<rect x="227" y="197" width="3" height="20" fill="#000"/>
<rect x="243" y="209" width="3" height="17" fill="#000"/>
<rect x="275" y="241" width="3" height="4" fill="#000"/>
<rect x="307" y="269" width="3" height="10" fill="#000"/>
<rect x="323" y="272" width="3" height="14" fill="#000"/>
<rect x="371" y="285" width="3" height="4" fill="#000"/>
<rect x="387" y="275" width="3" height="16" fill="#000"/>
<rect x="403" y="302" width="3" height="2" fill="#000"/>
<rect x="435" y="329" width="3" height="40" fill="#000"/>
<rect x="451" y="323" width="3" height="39" fill="#000"/>
<rect x="459" y="299" width="3" height="24" fill="#000"/>
<rect x="483" y="306" width="3" height="11" fill="#000"/>
<rect x="515" y="336" width="3" height="3" fill="#000"/>
<rect x="531" y="340" width="3" height="4" fill="#000"/>
<rect x="555" y="339" width="3" height="5" fill="#000"/>
<rect x="587" y="340" width="3" height="4" fill="#000"/>
<rect x="611" y="345" width="3" height="31" fill="#000"/>
<rect x="619" y="342" width="3" height="2" fill="#000"/>
<rect x="627" y="322" width="3" height="20" fill="#000"/>
<rect x="667" y="367" width="3" height="8" fill="#000"/>
<rect x="715" y="381" width="3" height="14" fill="#000"/>
<rect x="731" y="372" width="3" height="9" fill="#000"/>
<rect x="763" y="381" width="3" height="9" fill="#000"/>
<rect x="771" y="373" width="3" height="6" fill="#000"/>
<rect x="803" y="431" width="3" height="4" fill="#000"/>
<rect x="811" y="407" width="3" height="23" fill="#000"/>
<rect x="5" y="422" width="905" height="1" fill="#778899"/>
<rect x="4" y="101" width="1" height="5" fill="#00ff00"/>
<rect x="2" y="101" width="5" height="5" fill="#00ff00"/>
<rect x="3" y="102" width="3" height="3" fill="#fff"/>
<rect x="12" y="105" width="1" height="30" fill="#00ff00"/>
<rect x="10" y="105" width="5" height="19" fill="#00ff00"/>
<rect x="11" y="106" width="3" height="17" fill="#fff"/>
<rect x="20" y="122" width="1" height="37" fill="#00ff00"/>
<rect x="18" y="124" width="5" height="29" fill="#00ff00"/>
<rect x="19" y="125" width="3" height="27" fill="#fff"/>
<rect x="28" y="123" width="1" height="16" fill="#00ff00"/>
<path d="M26 139h5v1h-5z M26 152h5v1h-5z M26 140h1v12h-1z M30 140h1v12h-1z" fill="#00ff00"/>
<rect x="36" y="130" width="1" height="16" fill="#00ff00"/>
<rect x="34" y="139" width="5" height="5" fill="#00ff00"/>
<rect x="35" y="140" width="3" height="3" fill="#fff"/>
<rect x="44" y="131" width="1" height="2" fill="#00ff00"/>
<rect x="44" y="144" width="1" height="14" fill="#00ff00"/>
<path d="M42 133h5v1h-5z M42 143h5v1h-5z M42 134h1v9h-1z M46 134h1v9h-1z" fill="#00ff00"/>
<rect x="52" y="112" width="1" height="28" fill="#00ff00"/>
<rect x="50" y="134" width="5" height="3" fill="#00ff00"/>
<rect x="51" y="135" width="3" height="1" fill="#fff"/>
<rect x="60" y="105" width="1" height="10" fill="#00ff00"/>
<rect x="60" y="137" width="1" height="9" fill="#00ff00"/>
<path d="M58 115h5v1h-5z M58 136h5v1h-5z M58 116h1v20h-1z M62 116h1v20h-1z" fill="#00ff00"/>
<rect x="68" y="102" width="1" height="57" fill="#00ff00"/>
<rect x="66" y="115" width="5" height="36" fill="#00ff00"/>
<rect x="67" y="116" width="3" height="34" fill="#fff"/>
<rect x="76" y="142" width="1" height="33" fill="#00ff00"/>
<rect x="74" y="146" width="5" height="25" fill="#00ff00"/>
<rect x="75" y="147" width="3" height="23" fill="#fff"/>
<rect x="84" y="160" width="1" height="26" fill="#00ff00"/>
<rect x="82" y="171" width="5" height="3" fill="#00ff00"/>
<rect x="83" y="172" width="3" height="1" fill="#fff"/>
<rect x="92" y="157" width="1" height="7" fill="#00ff00"/>
<rect x="92" y="175" width="1" height="7" fill="#00ff00"/>
<path d="M90 164h5v1h-5z M90 174h5v1h-5z M90 165h1v9h-1z M94 165h1v9h-1z" fill="#00ff00"/>
<rect x="100" y="144" width="1" height="12" fill="#00ff00"/>
<rect x="100" y="164" width="1" height="1" fill="#00ff00"/>
<path d="M98 156h5v1h-5z M98 163h5v1h-5z M98 157h1v6h-1z M102 157h1v6h-1z" fill="#00ff00"/>
<rect x="108" y="154" width="1" height="10" fill="#00ff00"/>
<rect x="106" y="156" width="5" height="8" fill="#00ff00"/>
<rect x="107" y="157" width="3" height="6" fill="#fff"/>
<rect x="116" y="163" width="1" height="4" fill="#00ff00"/>
<path d="M114 155h5v1h-5z M114 162h5v1h-5z M114 156h1v6h-1z M118 156h1v6h-1z" fill="#00ff00"/>
<rect x="124" y="153" width="1" height="32" fill="#00ff00"/>
<rect x="122" y="156" width="5" height="19" fill="#00ff00"/>
<rect x="123" y="157" width="3" height="17" fill="#fff"/>
<rect x="132" y="169" width="1" height="11" fill="#00ff00"/>
<rect x="130" y="176" width="5" height="2" fill="#00ff00"/>
<rect x="140" y="163" width="1" height="2" fill="#00ff00"/>
<path d="M138 165h5v1h-5z M138 177h5v1h-5z M138 166h1v11h-1z M142 166h1v11h-1z" fill="#00ff00"/>
<rect x="148" y="165" width="1" height="13" fill="#00ff00"/>
<rect x="146" y="165" width="5" height="7" fill="#00ff00"/>
<rect x="147" y="166" width="3" height="5" fill="#fff"/>
<rect x="156" y="170" width="1" height="25" fill="#00ff00"/>
<rect x="154" y="171" width="5" height="15" fill="#00ff00"/>
<rect x="155" y="172" width="3" height="13" fill="#fff"/>
<rect x="164" y="171" width="1" height="9" fill="#00ff00"/>
<rect x="164" y="186" width="1" height="12" fill="#00ff00"/>
<path d="M162 180h5v1h-5z M162 185h5v1h-5z M162 181h1v4h-1z M166 181h1v4h-1z" fill="#00ff00"/>
<rect x="172" y="180" width="1" height="18" fill="#00ff00"/>
<rect x="170" y="180" width="5" height="13" fill="#00ff00"/>
<rect x="171" y="181" width="3" height="11" fill="#fff"/>
<rect x="180" y="183" width="1" height="1" fill="#00ff00"/>
<path d="M178 184h5v1h-5z M178 192h5v1h-5z M178 185h1v7h-1z M182 185h1v7h-1z" fill="#00ff00"/>
<rect x="188" y="181" width="1" height="18" fill="#00ff00"/>
<rect x="186" y="184" width="5" height="13" fill="#00ff00"/>
<rect x="187" y="185" width="3" height="11" fill="#fff"/>
<rect x="196" y="192" width="1" height="28" fill="#00ff00"/>
<rect x="194" y="196" width="5" height="18" fill="#00ff00"/>
<rect x="195" y="197" width="3" height="16" fill="#fff"/>
<rect x="204" y="212" width="1" height="27" fill="#00ff00"/>
<rect x="202" y="213" width="5" height="3" fill="#00ff00"/>
<rect x="203" y="214" width="3" height="1" fill="#fff"/>
<rect x="212" y="200" width="1" height="9" fill="#00ff00"/>
<rect x="212" y="216" width="1" height="18" fill="#00ff00"/>
<path d="M210 209h5v1h-5z M210 215h5v1h-5z M210 210h1v5h-1z M214 210h1v5h-1z" fill="#00ff00"/>
<rect x="220" y="199" width="1" height="18" fill="#00ff00"/>
<rect x="218" y="209" width="5" height="8" fill="#00ff00"/>
<rect x="219" y="210" width="3" height="6" fill="#fff"/>
<rect x="228" y="191" width="1" height="5" fill="#00ff00"/>
<rect x="228" y="218" width="1" height="4" fill="#00ff00"/>
<path d="M226 196h5v1h-5z M226 217h5v1h-5z M226 197h1v20h-1z M230 197h1v20h-1z" fill="#00ff00"/>
<rect x="236" y="195" width="1" height="36" fill="#00ff00"/>
<rect x="234" y="196" width="5" height="31" fill="#00ff00"/>
<rect x="235" y="197" width="3" height="29" fill="#fff"/>
<rect x="244" y="200" width="1" height="8" fill="#00ff00"/>
<rect x="244" y="227" width="1" height="2" fill="#00ff00"/>
<path d="M242 208h5v1h-5z M242 226h5v1h-5z M242 209h1v17h-1z M246 209h1v17h-1z" fill="#00ff00"/>
<rect x="252" y="199" width="1" height="25" fill="#00ff00"/>
<rect x="250" y="208" width="5" height="13" fill="#00ff00"/>
<rect x="251" y="209" width="3" height="11" fill="#fff"/>
<rect x="260" y="213" width="1" height="23" fill="#00ff00"/>
<rect x="258" y="221" width="5" height="10" fill="#00ff00"/>
<rect x="259" y="222" width="3" height="8" fill="#fff"/>
<rect x="268" y="223" width="1" height="29" fill="#00ff00"/>
<rect x="266" y="230" width="5" height="16" fill="#00ff00"/>
<rect x="267" y="231" width="3" height="14" fill="#fff"/>
<rect x="276" y="232" width="1" height="8" fill="#00ff00"/>
<rect x="276" y="246" width="1" height="7" fill="#00ff00"/>
<path d="M274 240h5v1h-5z M274 245h5v1h-5z M274 241h1v4h-1z M278 241h1v4h-1z" fill="#00ff00"/>
<rect x="284" y="233" width="1" height="20" fill="#00ff00"/>
<rect x="282" y="238" width="5" height="12" fill="#00ff00"/>
<rect x="283" y="239" width="3" height="10" fill="#fff"/>
<rect x="292" y="249" width="1" height="29" fill="#00ff00"/>
<rect x="290" y="250" width="5" height="24" fill="#00ff00"/>
<rect x="291" y="251" width="3" height="22" fill="#fff"/>
<rect x="300" y="273" width="1" height="12" fill="#00ff00"/>
<rect x="298" y="273" width="5" height="5" fill="#00ff00"/>
<rect x="299" y="274" width="3" height="3" fill="#fff"/>
<rect x="308" y="264" width="1" height="4" fill="#00ff00"/>
<rect x="308" y="280" width="1" height="2" fill="#00ff00"/>
<path d="M306 268h5v1h-5z M306 279h5v1h-5z M306 269h1v10h-1z M310 269h1v10h-1z" fill="#00ff00"/>
<rect x="316" y="268" width="1" height="20" fill="#00ff00"/>
<rect x="314" y="268" width="5" height="19" fill="#00ff00"/>
<rect x="315" y="269" width="3" height="17" fill="#fff"/>
<path d="M322 271h5v1h-5z M322 286h5v1h-5z M322 272h1v14h-1z M326 272h1v14h-1z" fill="#00ff00"/>
<rect x="332" y="267" width="1" height="10" fill="#00ff00"/>
<rect x="330" y="271" width="5" height="4" fill="#00ff00"/>
<rect x="331" y="272" width="3" height="2" fill="#fff"/>
<rect x="340" y="269" width="1" height="11" fill="#00ff00"/>
<rect x="338" y="275" width="5" height="4" fill="#00ff00"/>
<rect x="339" y="276" width="3" height="2" fill="#fff"/>
<rect x="348" y="276" width="1" height="16" fill="#00ff00"/>
<rect x="346" y="277" width="5" height="11" fill="#00ff00"/>
<rect x="347" y="278" width="3" height="9" fill="#fff"/>
<rect x="356" y="281" width="1" height="13" fill="#00ff00"/>
<rect x="354" y="287" width="5" height="1" fill="#00ff00"/>
<rect x="364" y="285" width="1" height="7" fill="#00ff00"/>
<rect x="362" y="287" width="5" height="3" fill="#00ff00"/>
<rect x="363" y="288" width="3" height="1" fill="#fff"/>
<rect x="372" y="290" width="1" height="8" fill="#00ff00"/>
<path d="M370 284h5v1h-5z M370 289h5v1h-5z M370 285h1v4h-1z M374 285h1v4h-1z" fill="#00ff00"/>
<rect x="380" y="277" width="1" height="13" fill="#00ff00"/>
<rect x="378" y="283" width="5" height="7" fill="#00ff00"/>
<rect x="379" y="284" width="3" height="5" fill="#fff"/>
<rect x="388" y="272" width="1" height="2" fill="#00ff00"/>
<path d="M386 274h5v1h-5z M386 291h5v1h-5z M386 275h1v16h-1z M390 275h1v16h-1z" fill="#00ff00"/>
<rect x="396" y="274" width="1" height="32" fill="#00ff00"/>
<rect x="394" y="274" width="5" height="30" fill="#00ff00"/>
<rect x="395" y="275" width="3" height="28" fill="#fff"/>
<rect x="404" y="296" width="1" height="5" fill="#00ff00"/>
<rect x="404" y="305" width="1" height="19" fill="#00ff00"/>
<path d="M402 301h5v1h-5z M402 304h5v1h-5z M402 302h1v2h-1z M406 302h1v2h-1z" fill="#00ff00"/>
<rect x="412" y="300" width="1" height="40" fill="#00ff00"/>
<rect x="410" y="301" width="5" height="27" fill="#00ff00"/>
<rect x="411" y="302" width="3" height="25" fill="#fff"/>
<rect x="420" y="323" width="1" height="38" fill="#00ff00"/>
<rect x="418" y="326" width="5" height="22" fill="#00ff00"/>
<rect x="419" y="327" width="3" height="20" fill="#fff"/>
<rect x="428" y="347" width="1" height="34" fill="#00ff00"/>
<rect x="426" y="348" width="5" height="22" fill="#00ff00"/>
<rect x="427" y="349" width="3" height="20" fill="#fff"/>
<rect x="436" y="370" width="1" height="4" fill="#00ff00"/>
<path d="M434 328h5v1h-5z M434 369h5v1h-5z M434 329h1v40h-1z M438 329h1v40h-1z" fill="#00ff00"/>
<rect x="444" y="318" width="1" height="48" fill="#00ff00"/>
<rect x="442" y="328" width="5" height="36" fill="#00ff00"/>
<rect x="443" y="329" width="3" height="34" fill="#fff"/>
<rect x="452" y="310" width="1" height="12" fill="#00ff00"/>
<rect x="452" y="363" width="1" height="1" fill="#00ff00"/>
<path d="M450 322h5v1h-5z M450 362h5v1h-5z M450 323h1v39h-1z M454 323h1v39h-1z" fill="#00ff00"/>
<rect x="460" y="291" width="1" height="7" fill="#00ff00"/>
<rect x="460" y="324" width="1" height="1" fill="#00ff00"/>
<path d="M458 298h5v1h-5z M458 323h5v1h-5z M458 299h1v24h-1z M462 299h1v24h-1z" fill="#00ff00"/>
<rect x="468" y="291" width="1" height="15" fill="#00ff00"/>
<rect x="466" y="298" width="5" height="1" fill="#00ff00"/>
<rect x="476" y="289" width="1" height="29" fill="#00ff00"/>
<rect x="474" y="298" width="5" height="20" fill="#00ff00"/>
<rect x="475" y="299" width="3" height="18" fill="#fff"/>
<rect x="484" y="299" width="1" height="6" fill="#00ff00"/>
<rect x="484" y="318" width="1" height="4" fill="#00ff00"/>
<path d="M482 305h5v1h-5z M482 317h5v1h-5z M482 306h1v11h-1z M486 306h1v11h-1z" fill="#00ff00"/>
<rect x="492" y="303" width="1" height="19" fill="#00ff00"/>
<rect x="490" y="305" width="5" height="12" fill="#00ff00"/>
<rect x="491" y="306" width="3" height="10" fill="#fff"/>
<rect x="500" y="306" width="1" height="29" fill="#00ff00"/>
<rect x="498" y="314" width="5" height="21" fill="#00ff00"/>
<rect x="499" y="315" width="3" height="19" fill="#fff"/>
<rect x="508" y="324" width="1" height="26" fill="#00ff00"/>
<rect x="506" y="334" width="5" height="5" fill="#00ff00"/>
<rect x="507" y="335" width="3" height="3" fill="#fff"/>
<rect x="516" y="327" width="1" height="8" fill="#00ff00"/>
<rect x="516" y="340" width="1" height="5" fill="#00ff00"/>
<path d="M514 335h5v1h-5z M514 339h5v1h-5z M514 336h1v3h-1z M518 336h1v3h-1z" fill="#00ff00"/>
<rect x="524" y="334" width="1" height="13" fill="#00ff00"/>
<rect x="522" y="334" width="5" height="11" fill="#00ff00"/>
<rect x="523" y="335" width="3" height="9" fill="#fff"/>
<rect x="532" y="338" width="1" height="1" fill="#00ff00"/>
<rect x="532" y="345" width="1" height="7" fill="#00ff00"/>
<path d="M530 339h5v1h-5z M530 344h5v1h-5z M530 340h1v4h-1z M534 340h1v4h-1z" fill="#00ff00"/>
<rect x="540" y="337" width="1" height="12" fill="#00ff00"/>
<rect x="538" y="339" width="5" height="6" fill="#00ff00"/>
<rect x="539" y="340" width="3" height="4" fill="#fff"/>
<rect x="548" y="342" width="1" height="2" fill="#00ff00"/>
<rect x="548" y="346" width="1" height="5" fill="#00ff00"/>
<rect x="546" y="344" width="5" height="2" fill="#00ff00"/>
<rect x="556" y="337" width="1" height="1" fill="#00ff00"/>
<rect x="556" y="345" width="1" height="2" fill="#00ff00"/>
<path d="M554 338h5v1h-5z M554 344h5v1h-5z M554 339h1v5h-1z M558 339h1v5h-1z" fill="#00ff00"/>
<rect x="564" y="331" width="1" height="7" fill="#00ff00"/>
<rect x="564" y="340" width="1" height="2" fill="#00ff00"/>
<rect x="562" y="338" width="5" height="2" fill="#00ff00"/>
<rect x="572" y="336" width="1" height="9" fill="#00ff00"/>
<rect x="570" y="337" width="5" height="5" fill="#00ff00"/>
<rect x="571" y="338" width="3" height="3" fill="#fff"/>
<rect x="580" y="338" width="1" height="12" fill="#00ff00"/>
<rect x="578" y="341" width="5" height="4" fill="#00ff00"/>
<rect x="579" y="342" width="3" height="2" fill="#fff"/>
<rect x="588" y="331" width="1" height="8" fill="#00ff00"/>
<rect x="588" y="345" width="1" height="11" fill="#00ff00"/>
<path d="M586 339h5v1h-5z M586 344h5v1h-5z M586 340h1v4h-1z M590 340h1v4h-1z" fill="#00ff00"/>
<rect x="596" y="339" width="1" height="45" fill="#00ff00"/>
<rect x="594" y="339" width="5" height="21" fill="#00ff00"/>
<rect x="595" y="340" width="3" height="19" fill="#fff"/>
<rect x="604" y="358" width="1" height="26" fill="#00ff00"/>
<rect x="602" y="359" width="5" height="18" fill="#00ff00"/>
<rect x="603" y="360" width="3" height="16" fill="#fff"/>
<rect x="612" y="340" width="1" height="4" fill="#00ff00"/>
<path d="M610 344h5v1h-5z M610 376h5v1h-5z M610 345h1v31h-1z M614 345h1v31h-1z" fill="#00ff00"/>
<rect x="620" y="330" width="1" height="11" fill="#00ff00"/>
<rect x="620" y="345" width="1" height="3" fill="#00ff00"/>
<path d="M618 341h5v1h-5z M618 344h5v1h-5z M618 342h1v2h-1z M622 342h1v2h-1z" fill="#00ff00"/>
<rect x="628" y="320" width="1" height="1" fill="#00ff00"/>
<rect x="628" y="343" width="1" height="8" fill="#00ff00"/>
<path d="M626 321h5v1h-5z M626 342h5v1h-5z M626 322h1v20h-1z M630 322h1v20h-1z" fill="#00ff00"/>
<rect x="636" y="312" width="1" height="21" fill="#00ff00"/>
<rect x="634" y="320" width="5" height="3" fill="#00ff00"/>
<rect x="635" y="321" width="3" height="1" fill="#fff"/>
<rect x="644" y="316" width="1" height="41" fill="#00ff00"/>
<rect x="642" y="322" width="5" height="23" fill="#00ff00"/>
<rect x="643" y="323" width="3" height="21" fill="#fff"/>
<rect x="652" y="336" width="1" height="38" fill="#00ff00"/>
<rect x="650" y="345" width="5" height="25" fill="#00ff00"/>
<rect x="651" y="346" width="3" height="23" fill="#fff"/>
<rect x="660" y="362" width="1" height="26" fill="#00ff00"/>
<rect x="658" y="368" width="5" height="8" fill="#00ff00"/>
<rect x="659" y="369" width="3" height="6" fill="#fff"/>
<rect x="668" y="358" width="1" height="8" fill="#00ff00"/>
<rect x="668" y="376" width="1" height="2" fill="#00ff00"/>
<path d="M666 366h5v1h-5z M666 375h5v1h-5z M666 367h1v8h-1z M670 367h1v8h-1z" fill="#00ff00"/>
<rect x="676" y="362" width="1" height="25" fill="#00ff00"/>
<rect x="674" y="366" width="5" height="13" fill="#00ff00"/>
<rect x="675" y="367" width="3" height="11" fill="#fff"/>
<rect x="684" y="373" width="1" height="15" fill="#00ff00"/>
<rect x="682" y="378" width="5" height="6" fill="#00ff00"/>
<rect x="683" y="379" width="3" height="4" fill="#fff"/>
<rect x="692" y="378" width="1" height="10" fill="#00ff00"/>
<rect x="690" y="381" width="5" height="4" fill="#00ff00"/>
<rect x="691" y="382" width="3" height="2" fill="#fff"/>
<rect x="700" y="377" width="1" height="14" fill="#00ff00"/>
<rect x="698" y="384" width="5" height="6" fill="#00ff00"/>
<rect x="699" y="385" width="3" height="4" fill="#fff"/>
<rect x="708" y="377" width="1" height="28" fill="#00ff00"/>
<rect x="706" y="381" width="5" height="15" fill="#00ff00"/>
<rect x="707" y="382" width="3" height="13" fill="#fff"/>
<rect x="716" y="378" width="1" height="2" fill="#00ff00"/>
<path d="M714 380h5v1h-5z M714 395h5v1h-5z M714 381h1v14h-1z M718 381h1v14h-1z" fill="#00ff00"/>
<rect x="724" y="377" width="1" height="7" fill="#00ff00"/>
<rect x="722" y="381" width="5" height="1" fill="#00ff00"/>
<path d="M730 371h5v1h-5z M730 381h5v1h-5z M730 372h1v9h-1z M734 372h1v9h-1z" fill="#00ff00"/>
<rect x="740" y="371" width="1" height="10" fill="#00ff00"/>
<rect x="738" y="372" width="5" height="8" fill="#00ff00"/>
<rect x="739" y="373" width="3" height="6" fill="#fff"/>
<rect x="748" y="378" width="1" height="17" fill="#00ff00"/>
<rect x="746" y="379" width="5" height="11" fill="#00ff00"/>
<rect x="747" y="380" width="3" height="9" fill="#fff"/>
<rect x="756" y="387" width="1" height="9" fill="#00ff00"/>
<rect x="754" y="390" width="5" height="2" fill="#00ff00"/>
<rect x="764" y="379" width="1" height="1" fill="#00ff00"/>
<rect x="764" y="391" width="1" height="4" fill="#00ff00"/>
<path d="M762 380h5v1h-5z M762 390h5v1h-5z M762 381h1v9h-1z M766 381h1v9h-1z" fill="#00ff00"/>
<rect x="772" y="365" width="1" height="7" fill="#00ff00"/>
<rect x="772" y="380" width="1" height="4" fill="#00ff00"/>
<path d="M770 372h5v1h-5z M770 379h5v1h-5z M770 373h1v6h-1z M774 373h1v6h-1z" fill="#00ff00"/>
<rect x="780" y="371" width="1" height="29" fill="#00ff00"/>
<rect x="778" y="371" width="5" height="17" fill="#00ff00"/>
<rect x="779" y="372" width="3" height="15" fill="#fff"/>
<rect x="788" y="384" width="1" height="37" fill="#00ff00"/>
<rect x="786" y="387" width="5" height="26" fill="#00ff00"/>
<rect x="787" y="388" width="3" height="24" fill="#fff"/>
<rect x="796" y="399" width="1" height="38" fill="#00ff00"/>
<rect x="794" y="411" width="5" height="23" fill="#00ff00"/>
<rect x="795" y="412" width="3" height="21" fill="#fff"/>
<rect x="804" y="426" width="1" height="4" fill="#00ff00"/>
<rect x="804" y="436" width="1" height="14" fill="#00ff00"/>
<path d="M802 430h5v1h-5z M802 435h5v1h-5z M802 431h1v4h-1z M806 431h1v4h-1z" fill="#00ff00"/>
<rect x="812" y="386" width="1" height="20" fill="#00ff00"/>
<rect x="812" y="431" width="1" height="1" fill="#00ff00"/>
<path d="M810 406h5v1h-5z M810 430h5v1h-5z M810 407h1v23h-1z M814 407h1v23h-1z" fill="#00ff00"/>
<rect x="820" y="405" width="1" height="21" fill="#00ff00"/>
<rect x="818" y="406" width="5" height="17" fill="#00ff00"/>
<rect x="819" y="407" width="3" height="15" fill="#fff"/>
</g>
<polygon points="814.5,36 824.5,36 819.5,41" fill="#778899"/>
<rect x="911" y="45" width="4" height="1" fill="#fff"/>
<text x="916" y="49" class="ax">1.14560</text>
<rect x="911" y="78" width="4" height="1" fill="#fff"/>
<text x="916" y="82" class="ax">1.14430</text>
<rect x="911" y="111" width="4" height="1" fill="#fff"/>
<text x="916" y="115" class="ax">1.14300</text>
<rect x="911" y="144" width="4" height="1" fill="#fff"/>
<text x="916" y="148" class="ax">1.14170</text>
<rect x="911" y="177" width="4" height="1" fill="#fff"/>
<text x="916" y="181" class="ax">1.14040</text>
<rect x="911" y="210" width="4" height="1" fill="#fff"/>
<text x="916" y="214" class="ax">1.13910</text>
<rect x="911" y="242" width="4" height="1" fill="#fff"/>
<text x="916" y="246" class="ax">1.13780</text>
<rect x="911" y="275" width="4" height="1" fill="#fff"/>
<text x="916" y="279" class="ax">1.13650</text>
<rect x="911" y="308" width="4" height="1" fill="#fff"/>
<text x="916" y="312" class="ax">1.13520</text>
<rect x="911" y="341" width="4" height="1" fill="#fff"/>
<text x="916" y="345" class="ax">1.13390</text>
<rect x="911" y="374" width="4" height="1" fill="#fff"/>
<text x="916" y="378" class="ax">1.13260</text>
<rect x="911" y="407" width="4" height="1" fill="#fff"/>
<text x="916" y="411" class="ax">1.13130</text>
<rect x="911" y="440" width="4" height="1" fill="#fff"/>
<text x="916" y="444" class="ax">1.13000</text>
<rect x="911" y="473" width="4" height="1" fill="#fff"/>
<text x="916" y="477" class="ax">1.12870</text>
<rect x="913" y="417" width="39" height="11" fill="#778899"/>
<text x="916" y="426" class="ax" style="fill:#000">1.13073</text>
<rect x="4" y="507" width="1" height="4" fill="#fff"/>
<text x="3.5" y="519" class="tx">5 Feb 2019</text>
<rect x="68" y="507" width="1" height="4" fill="#fff"/>
<text x="67.5" y="519" class="tx">5 Feb 16:00</text>
<rect x="132" y="507" width="1" height="4" fill="#fff"/>
<text x="131.5" y="519" class="tx">6 Feb 00:00</text>
<rect x="196" y="507" width="1" height="4" fill="#fff"/>
<text x="195.5" y="519" class="tx">6 Feb 08:00</text>
<rect x="260" y="507" width="1" height="4" fill="#fff"/>
<text x="259.5" y="519" class="tx">6 Feb 16:00</text>
<rect x="324" y="507" width="1" height="4" fill="#fff"/>
<text x="323.5" y="519" class="tx">7 Feb 00:00</text>
<rect x="388" y="507" width="1" height="4" fill="#fff"/>
<text x="387.5" y="519" class="tx">7 Feb 08:00</text>
<rect x="452" y="507" width="1" height="4" fill="#fff"/>
<text x="451.5" y="519" class="tx">7 Feb 16:00</text>
<rect x="516" y="507" width="1" height="4" fill="#fff"/>
<text x="515.5" y="519" class="tx">8 Feb 00:00</text>
<rect x="580" y="507" width="1" height="4" fill="#fff"/>
<text x="579.5" y="519" class="tx">8 Feb 08:00</text>
<rect x="644" y="507" width="1" height="4" fill="#fff"/>
<text x="643.5" y="519" class="tx">8 Feb 16:00</text>
<rect x="708" y="507" width="1" height="4" fill="#fff"/>
<text x="707.5" y="519" class="tx">11 Feb 00:00</text>
<rect x="772" y="507" width="1" height="4" fill="#fff"/>
<text x="771.5" y="519" class="tx">11 Feb 08:00</text>
<text x="45" y="49.5" class="ttl">EURUSD,H1</text>
<g>
<rect x="8" y="39" width="14" height="12" fill="#fff"/>
<rect x="8" y="39" width="14" height="2" fill="#6a6aff"/>
<rect x="8" y="41" width="14" height="1" fill="#8080c0"/>
<g fill="#e06060"><rect x="10" y="43" width="5" height="1"/><rect x="10" y="45" width="5" height="1"/><rect x="10" y="47" width="5" height="1"/><rect x="10" y="49" width="5" height="1"/></g>
<g fill="#6a6aee"><rect x="16" y="43" width="5" height="1"/><rect x="16" y="45" width="5" height="1"/><rect x="16" y="47" width="5" height="1"/><rect x="16" y="49" width="5" height="1"/></g>
</g>
<g>
<rect x="25" y="40" width="7" height="11" fill="#2222ee"/>
<rect x="32" y="40" width="8" height="11" fill="#cc3333"/>
<rect x="29" y="40" width="6" height="4" fill="#b0b0a0"/>
<rect x="26" y="49" width="5" height="1" fill="#8888ff"/>
<rect x="33" y="49" width="6" height="1" fill="#ee8888"/>
</g>
</svg>
<!-- toolbox -->
<div class="abs" style="left:0;top:527px;width:963px;height:1px;background:#fafafa"></div>
<svg class="abs" style="left:3px;top:534px" width="8" height="7"><path d="M1 1 L7 6.5 M7 1 L1 6.5" stroke="#000" stroke-width="1.8"/></svg>
<div class="abs" style="left:1px;top:546px;width:13px;height:337px;background:#b9d1ea"></div>
<div class="abs" style="left:1px;top:842px;width:13px;height:40px;">
  <div style="position:absolute;left:-12px;top:12px;width:40px;height:13px;transform:rotate(-90deg) scaleX(0.9);font-size:12px;color:#202020;line-height:13px;text-align:center">Toolbox</div>
</div>
<div class="abs" style="left:15px;top:532px;width:946px;height:1px;background:#a0a0a0"></div>
<div class="abs" style="left:15px;top:532px;width:1px;height:350px;background:#a0a0a0"></div>
<div class="abs" style="left:16px;top:533px;width:945px;height:327px;background:#fff"></div>
<div class="abs" style="left:16px;top:533px;width:945px;height:18px;background:#fcfcfc"></div>
<div class="abs" style="left:16px;top:551px;width:945px;height:1px;background:#e0e0e0"></div>
<div class="abs hdr" style="left:22px;top:536px">Symbol</div>
<div class="abs" style="left:102px;top:533px;width:1px;height:18px;background:#e0e0e0"></div>
<div class="abs hdr" style="left:110px;top:536px">Ticket</div>
<div class="abs" style="left:162px;top:533px;width:1px;height:18px;background:#e0e0e0"></div>
<div class="abs hdr" style="left:162px;width:96px;top:536px;text-align:right">Time</div>
<div class="abs" style="left:263px;top:533px;width:1px;height:18px;background:#e0e0e0"></div>
<div class="abs hdr" style="left:263px;width:62px;top:536px;text-align:right">Type</div>
<div class="abs" style="left:330px;top:533px;width:1px;height:18px;background:#e0e0e0"></div>
<div class="abs hdr" style="left:330px;width:62px;top:536px;text-align:right">Volume</div>
<div class="abs" style="left:397px;top:533px;width:1px;height:18px;background:#e0e0e0"></div>
<div class="abs hdr" style="left:397px;width:62px;top:536px;text-align:right">Price</div>
<div class="abs" style="left:464px;top:533px;width:1px;height:18px;background:#e0e0e0"></div>
<div class="abs hdr" style="left:464px;width:62px;top:536px;text-align:right">S / L</div>
<div class="abs" style="left:531px;top:533px;width:1px;height:18px;background:#e0e0e0"></div>
<div class="abs hdr" style="left:531px;width:62px;top:536px;text-align:right">T / P</div>
<div class="abs" style="left:598px;top:533px;width:1px;height:18px;background:#e0e0e0"></div>
<div class="abs hdr" style="left:598px;width:62px;top:536px;text-align:right">Price</div>
<div class="abs" style="left:665px;top:533px;width:1px;height:18px;background:#e0e0e0"></div>
<div class="abs hdr" style="left:665px;width:62px;top:536px;text-align:right">Swap</div>
<div class="abs" style="left:732px;top:533px;width:1px;height:18px;background:#e0e0e0"></div>
<div class="abs hdr" style="left:732px;width:69px;top:536px;text-align:right">Profit</div>
<div class="abs" style="left:806px;top:533px;width:1px;height:18px;background:#e0e0e0"></div>
<div class="abs hdr" style="left:806px;width:150px;top:536px;text-align:right">Comment</div>
<div class="abs" style="left:16px;top:552px;width:945px;height:19px;background:#fff"></div>
<div class="abs" style="left:16px;top:571px;width:945px;height:1px;background:#d0d0d0"></div>
<div class="abs" style="left:102px;top:552px;width:1px;height:19px;background:#d0d0d0"></div>
<div class="abs" style="left:162px;top:552px;width:1px;height:19px;background:#d0d0d0"></div>
<div class="abs" style="left:263px;top:552px;width:1px;height:19px;background:#d0d0d0"></div>
<div class="abs" style="left:330px;top:552px;width:1px;height:19px;background:#d0d0d0"></div>
<div class="abs" style="left:397px;top:552px;width:1px;height:19px;background:#d0d0d0"></div>
<div class="abs" style="left:464px;top:552px;width:1px;height:19px;background:#d0d0d0"></div>
<div class="abs" style="left:531px;top:552px;width:1px;height:19px;background:#d0d0d0"></div>
<div class="abs" style="left:598px;top:552px;width:1px;height:19px;background:#d0d0d0"></div>
<div class="abs" style="left:665px;top:552px;width:1px;height:19px;background:#d0d0d0"></div>
<div class="abs" style="left:732px;top:552px;width:1px;height:19px;background:#d0d0d0"></div>
<div class="abs" style="left:806px;top:552px;width:1px;height:19px;background:#d0d0d0"></div>
<svg class="abs" style="left:18px;top:553px" width="13" height="17" viewBox="0 0 13 17"><path d="M1.4 0.6 H10.6 Q11.4 0.6 11.4 1.4 V10.8 L6.8 15.4 H1.4 Q0.6 15.4 0.6 14.6 V1.4 Q0.6 0.6 1.4 0.6 Z" fill="#fff" stroke="#1f7dc4" stroke-width="1.25"/><path d="M2.2 2.2 H9.8 V10 H6.5 V13.8 H2.2 Z" fill="#c4dcf8"/><path d="M3 4.4 H9 M3 7.5 H9" stroke="#3a8cc8" stroke-width="1"/><path d="M6.6 10.6 H11.6 L6.6 15.6 Z" fill="#1f70b8"/></svg>
<div class="abs t12" style="left:37px;transform-origin:0 0;top:555px;color:#000;">eurusd</div>
<div class="abs t12" style="left:106px;transform-origin:0 0;top:555px;transform:scaleX(0.9);color:#000;">1015808...</div>
<div class="abs t12" style="left:166.5px;transform-origin:0 0;top:555px;transform:scaleX(0.9);color:#000;">2019.02.05 22:45...</div>
<div class="abs t12" style="right:635.5px;transform-origin:100% 0;top:555px;color:#000;">buy</div>
<div class="abs t12" style="right:568.5px;transform-origin:100% 0;top:555px;transform:scaleX(0.9);color:#000;">0.03</div>
<div class="abs t12" style="right:501.7px;transform-origin:100% 0;top:555px;transform:scaleX(0.9);color:#000;">1.14120</div>
<div class="abs t12" style="right:434.79999999999995px;transform-origin:100% 0;top:555px;transform:scaleX(0.9);color:#000;">0.00000</div>
<div class="abs t12" style="right:368.20000000000005px;transform-origin:100% 0;top:555px;transform:scaleX(0.9);color:#000;">0.00000</div>
<div class="abs t12" style="right:300.70000000000005px;transform-origin:100% 0;top:555px;transform:scaleX(0.9);color:#000;">1.13073</div>
<div class="abs t12" style="right:233.5px;transform-origin:100% 0;top:555px;transform:scaleX(0.9);color:#000;">-2.13</div>
<div class="abs t12" style="right:178.5px;transform-origin:100% 0;top:555px;transform:scaleX(0.9);color:#000;">-31.41</div>
<svg class="abs" style="left:793px;top:558px" width="8" height="8"><path d="M0.8 0.8 L7.2 7.2 M7.2 0.8 L0.8 7.2" stroke="#8c8c8c" stroke-width="1.7"/></svg>
<div class="abs t12" style="right:5.7999999999999545px;transform-origin:100% 0;top:555px;transform:scaleX(0.97);color:#000;">IlanisMT5, 1000, 5</div>
<div class="abs" style="left:16px;top:572px;width:945px;height:19px;background:#ececec"></div>
<div class="abs" style="left:16px;top:591px;width:945px;height:1px;background:#d0d0d0"></div>
<div class="abs" style="left:102px;top:572px;width:1px;height:19px;background:#d0d0d0"></div>
<div class="abs" style="left:162px;top:572px;width:1px;height:19px;background:#d0d0d0"></div>
<div class="abs" style="left:263px;top:572px;width:1px;height:19px;background:#d0d0d0"></div>
<div class="abs" style="left:330px;top:572px;width:1px;height:19px;background:#d0d0d0"></div>
<div class="abs" style="left:397px;top:572px;width:1px;height:19px;background:#d0d0d0"></div>
<div class="abs" style="left:464px;top:572px;width:1px;height:19px;background:#d0d0d0"></div>
<div class="abs" style="left:531px;top:572px;width:1px;height:19px;background:#d0d0d0"></div>
<div class="abs" style="left:598px;top:572px;width:1px;height:19px;background:#d0d0d0"></div>
<div class="abs" style="left:665px;top:572px;width:1px;height:19px;background:#d0d0d0"></div>
<div class="abs" style="left:732px;top:572px;width:1px;height:19px;background:#d0d0d0"></div>
<div class="abs" style="left:806px;top:572px;width:1px;height:19px;background:#d0d0d0"></div>
<svg class="abs" style="left:18px;top:573px" width="13" height="17" viewBox="0 0 13 17"><path d="M1.4 0.6 H10.6 Q11.4 0.6 11.4 1.4 V10.8 L6.8 15.4 H1.4 Q0.6 15.4 0.6 14.6 V1.4 Q0.6 0.6 1.4 0.6 Z" fill="#fff" stroke="#1f7dc4" stroke-width="1.25"/><path d="M2.2 2.2 H9.8 V10 H6.5 V13.8 H2.2 Z" fill="#c4dcf8"/><path d="M3 4.4 H9 M3 7.5 H9" stroke="#3a8cc8" stroke-width="1"/><path d="M6.6 10.6 H11.6 L6.6 15.6 Z" fill="#1f70b8"/></svg>
<div class="abs t12" style="left:37px;transform-origin:0 0;top:575px;color:#000;">eurusd</div>
<div class="abs t12" style="left:106px;transform-origin:0 0;top:575px;transform:scaleX(0.9);color:#000;">1015808...</div>
<div class="abs t12" style="left:166.5px;transform-origin:0 0;top:575px;transform:scaleX(0.9);color:#000;">2019.02.06 00:20...</div>
<div class="abs t12" style="right:635.5px;transform-origin:100% 0;top:575px;color:#000;">buy</div>
<div class="abs t12" style="right:568.5px;transform-origin:100% 0;top:575px;transform:scaleX(0.9);color:#000;">0.03</div>
<div class="abs t12" style="right:501.7px;transform-origin:100% 0;top:575px;transform:scaleX(0.9);color:#000;">1.14069</div>
<div class="abs t12" style="right:434.79999999999995px;transform-origin:100% 0;top:575px;transform:scaleX(0.9);color:#000;">0.00000</div>
<div class="abs t12" style="right:368.20000000000005px;transform-origin:100% 0;top:575px;transform:scaleX(0.9);color:#000;">0.00000</div>
<div class="abs t12" style="right:300.70000000000005px;transform-origin:100% 0;top:575px;transform:scaleX(0.9);color:#000;">1.13073</div>
<div class="abs t12" style="right:233.5px;transform-origin:100% 0;top:575px;transform:scaleX(0.9);color:#000;">-1.77</div>
<div class="abs t12" style="right:178.5px;transform-origin:100% 0;top:575px;transform:scaleX(0.9);color:#000;">-29.88</div>
<svg class="abs" style="left:793px;top:578px" width="8" height="8"><path d="M0.8 0.8 L7.2 7.2 M7.2 0.8 L0.8 7.2" stroke="#8c8c8c" stroke-width="1.7"/></svg>
<div class="abs t12" style="right:5.7999999999999545px;transform-origin:100% 0;top:575px;transform:scaleX(0.97);color:#000;">IlanisMT5, 1001, 9</div>
<div class="abs" style="left:16px;top:592px;width:945px;height:19px;background:#fff"></div>
<div class="abs" style="left:16px;top:611px;width:945px;height:1px;background:#d0d0d0"></div>
<div class="abs" style="left:102px;top:592px;width:1px;height:19px;background:#d0d0d0"></div>
<div class="abs" style="left:162px;top:592px;width:1px;height:19px;background:#d0d0d0"></div>
<div class="abs" style="left:263px;top:592px;width:1px;height:19px;background:#d0d0d0"></div>
<div class="abs" style="left:330px;top:592px;width:1px;height:19px;background:#d0d0d0"></div>
<div class="abs" style="left:397px;top:592px;width:1px;height:19px;background:#d0d0d0"></div>
<div class="abs" style="left:464px;top:592px;width:1px;height:19px;background:#d0d0d0"></div>
<div class="abs" style="left:531px;top:592px;width:1px;height:19px;background:#d0d0d0"></div>
<div class="abs" style="left:598px;top:592px;width:1px;height:19px;background:#d0d0d0"></div>
<div class="abs" style="left:665px;top:592px;width:1px;height:19px;background:#d0d0d0"></div>
<div class="abs" style="left:732px;top:592px;width:1px;height:19px;background:#d0d0d0"></div>
<div class="abs" style="left:806px;top:592px;width:1px;height:19px;background:#d0d0d0"></div>
<svg class="abs" style="left:18px;top:593px" width="13" height="17" viewBox="0 0 13 17"><path d="M1.4 0.6 H10.6 Q11.4 0.6 11.4 1.4 V10.8 L6.8 15.4 H1.4 Q0.6 15.4 0.6 14.6 V1.4 Q0.6 0.6 1.4 0.6 Z" fill="#fff" stroke="#1f7dc4" stroke-width="1.25"/><path d="M2.2 2.2 H9.8 V10 H6.5 V13.8 H2.2 Z" fill="#c4dcf8"/><path d="M3 4.4 H9 M3 7.5 H9" stroke="#3a8cc8" stroke-width="1"/><path d="M6.6 10.6 H11.6 L6.6 15.6 Z" fill="#1f70b8"/></svg>
<div class="abs t12" style="left:37px;transform-origin:0 0;top:595px;color:#000;">eurusd</div>
<div class="abs t12" style="left:106px;transform-origin:0 0;top:595px;transform:scaleX(0.9);color:#000;">1015808...</div>
<div class="abs t12" style="left:166.5px;transform-origin:0 0;top:595px;transform:scaleX(0.9);color:#000;">2019.02.06 01:00...</div>
<div class="abs t12" style="right:635.5px;transform-origin:100% 0;top:595px;color:#000;">buy</div>
<div class="abs t12" style="right:568.5px;transform-origin:100% 0;top:595px;transform:scaleX(0.9);color:#000;">0.04</div>
<div class="abs t12" style="right:501.7px;transform-origin:100% 0;top:595px;transform:scaleX(0.9);color:#000;">1.14058</div>
<div class="abs t12" style="right:434.79999999999995px;transform-origin:100% 0;top:595px;transform:scaleX(0.9);color:#000;">0.00000</div>
<div class="abs t12" style="right:368.20000000000005px;transform-origin:100% 0;top:595px;transform:scaleX(0.9);color:#000;">0.00000</div>
<div class="abs t12" style="right:300.70000000000005px;transform-origin:100% 0;top:595px;transform:scaleX(0.9);color:#000;">1.13073</div>
<div class="abs t12" style="right:233.5px;transform-origin:100% 0;top:595px;transform:scaleX(0.9);color:#000;">-2.36</div>
<div class="abs t12" style="right:178.5px;transform-origin:100% 0;top:595px;transform:scaleX(0.9);color:#000;">-39.40</div>
<svg class="abs" style="left:793px;top:598px" width="8" height="8"><path d="M0.8 0.8 L7.2 7.2 M7.2 0.8 L0.8 7.2" stroke="#8c8c8c" stroke-width="1.7"/></svg>
<div class="abs t12" style="right:5.7999999999999545px;transform-origin:100% 0;top:595px;transform:scaleX(0.97);color:#000;">IlanisMT5, 1002, 23</div>
<div class="abs" style="left:16px;top:612px;width:945px;height:19px;background:#ececec"></div>
<div class="abs" style="left:16px;top:631px;width:945px;height:1px;background:#d0d0d0"></div>
<div class="abs" style="left:102px;top:612px;width:1px;height:19px;background:#d0d0d0"></div>
<div class="abs" style="left:162px;top:612px;width:1px;height:19px;background:#d0d0d0"></div>
<div class="abs" style="left:263px;top:612px;width:1px;height:19px;background:#d0d0d0"></div>
<div class="abs" style="left:330px;top:612px;width:1px;height:19px;background:#d0d0d0"></div>
<div class="abs" style="left:397px;top:612px;width:1px;height:19px;background:#d0d0d0"></div>
<div class="abs" style="left:464px;top:612px;width:1px;height:19px;background:#d0d0d0"></div>
<div class="abs" style="left:531px;top:612px;width:1px;height:19px;background:#d0d0d0"></div>
<div class="abs" style="left:598px;top:612px;width:1px;height:19px;background:#d0d0d0"></div>
<div class="abs" style="left:665px;top:612px;width:1px;height:19px;background:#d0d0d0"></div>
<div class="abs" style="left:732px;top:612px;width:1px;height:19px;background:#d0d0d0"></div>
<div class="abs" style="left:806px;top:612px;width:1px;height:19px;background:#d0d0d0"></div>
<svg class="abs" style="left:18px;top:613px" width="13" height="17" viewBox="0 0 13 17"><path d="M1.4 0.6 H10.6 Q11.4 0.6 11.4 1.4 V10.8 L6.8 15.4 H1.4 Q0.6 15.4 0.6 14.6 V1.4 Q0.6 0.6 1.4 0.6 Z" fill="#fff" stroke="#1f7dc4" stroke-width="1.25"/><path d="M2.2 2.2 H9.8 V10 H6.5 V13.8 H2.2 Z" fill="#c4dcf8"/><path d="M3 4.4 H9 M3 7.5 H9" stroke="#3a8cc8" stroke-width="1"/><path d="M6.6 10.6 H11.6 L6.6 15.6 Z" fill="#1f70b8"/></svg>
<div class="abs t12" style="left:37px;transform-origin:0 0;top:615px;color:#000;">eurusd</div>
<div class="abs t12" style="left:106px;transform-origin:0 0;top:615px;transform:scaleX(0.9);color:#000;">1015810...</div>
<div class="abs t12" style="left:166.5px;transform-origin:0 0;top:615px;transform:scaleX(0.9);color:#000;">2019.02.06 06:15...</div>
<div class="abs t12" style="right:635.5px;transform-origin:100% 0;top:615px;color:#000;">buy</div>
<div class="abs t12" style="right:568.5px;transform-origin:100% 0;top:615px;transform:scaleX(0.9);color:#000;">0.05</div>
<div class="abs t12" style="right:501.7px;transform-origin:100% 0;top:615px;transform:scaleX(0.9);color:#000;">1.14002</div>
<div class="abs t12" style="right:434.79999999999995px;transform-origin:100% 0;top:615px;transform:scaleX(0.9);color:#000;">0.00000</div>
<div class="abs t12" style="right:368.20000000000005px;transform-origin:100% 0;top:615px;transform:scaleX(0.9);color:#000;">0.00000</div>
<div class="abs t12" style="right:300.70000000000005px;transform-origin:100% 0;top:615px;transform:scaleX(0.9);color:#000;">1.13073</div>
<div class="abs t12" style="right:233.5px;transform-origin:100% 0;top:615px;transform:scaleX(0.9);color:#000;">-2.96</div>
<div class="abs t12" style="right:178.5px;transform-origin:100% 0;top:615px;transform:scaleX(0.9);color:#000;">-46.45</div>
<svg class="abs" style="left:793px;top:618px" width="8" height="8"><path d="M0.8 0.8 L7.2 7.2 M7.2 0.8 L0.8 7.2" stroke="#8c8c8c" stroke-width="1.7"/></svg>
<div class="abs t12" style="right:5.7999999999999545px;transform-origin:100% 0;top:615px;transform:scaleX(0.97);color:#000;">IlanisMT5, 1003, 6</div>
<div class="abs" style="left:16px;top:632px;width:945px;height:19px;background:#fff"></div>
<div class="abs" style="left:16px;top:651px;width:945px;height:1px;background:#d0d0d0"></div>
<div class="abs" style="left:102px;top:632px;width:1px;height:19px;background:#d0d0d0"></div>
<div class="abs" style="left:162px;top:632px;width:1px;height:19px;background:#d0d0d0"></div>
<div class="abs" style="left:263px;top:632px;width:1px;height:19px;background:#d0d0d0"></div>
<div class="abs" style="left:330px;top:632px;width:1px;height:19px;background:#d0d0d0"></div>
<div class="abs" style="left:397px;top:632px;width:1px;height:19px;background:#d0d0d0"></div>
<div class="abs" style="left:464px;top:632px;width:1px;height:19px;background:#d0d0d0"></div>
<div class="abs" style="left:531px;top:632px;width:1px;height:19px;background:#d0d0d0"></div>
<div class="abs" style="left:598px;top:632px;width:1px;height:19px;background:#d0d0d0"></div>
<div class="abs" style="left:665px;top:632px;width:1px;height:19px;background:#d0d0d0"></div>
<div class="abs" style="left:732px;top:632px;width:1px;height:19px;background:#d0d0d0"></div>
<div class="abs" style="left:806px;top:632px;width:1px;height:19px;background:#d0d0d0"></div>
<svg class="abs" style="left:18px;top:633px" width="13" height="17" viewBox="0 0 13 17"><path d="M1.4 0.6 H10.6 Q11.4 0.6 11.4 1.4 V10.8 L6.8 15.4 H1.4 Q0.6 15.4 0.6 14.6 V1.4 Q0.6 0.6 1.4 0.6 Z" fill="#fff" stroke="#1f7dc4" stroke-width="1.25"/><path d="M2.2 2.2 H9.8 V10 H6.5 V13.8 H2.2 Z" fill="#c4dcf8"/><path d="M3 4.4 H9 M3 7.5 H9" stroke="#3a8cc8" stroke-width="1"/><path d="M6.6 10.6 H11.6 L6.6 15.6 Z" fill="#1f70b8"/></svg>
<div class="abs t12" style="left:37px;transform-origin:0 0;top:635px;color:#000;">eurusd</div>
<div class="abs t12" style="left:106px;transform-origin:0 0;top:635px;transform:scaleX(0.9);color:#000;">1015814...</div>
<div class="abs t12" style="left:166.5px;transform-origin:0 0;top:635px;transform:scaleX(0.9);color:#000;">2019.02.06 09:40...</div>
<div class="abs t12" style="right:635.5px;transform-origin:100% 0;top:635px;color:#000;">buy</div>
<div class="abs t12" style="right:568.5px;transform-origin:100% 0;top:635px;transform:scaleX(0.9);color:#000;">0.08</div>
<div class="abs t12" style="right:501.7px;transform-origin:100% 0;top:635px;transform:scaleX(0.9);color:#000;">1.13865</div>
<div class="abs t12" style="right:434.79999999999995px;transform-origin:100% 0;top:635px;transform:scaleX(0.9);color:#000;">0.00000</div>
<div class="abs t12" style="right:368.20000000000005px;transform-origin:100% 0;top:635px;transform:scaleX(0.9);color:#000;">0.00000</div>
<div class="abs t12" style="right:300.70000000000005px;transform-origin:100% 0;top:635px;transform:scaleX(0.9);color:#000;">1.13073</div>
<div class="abs t12" style="right:233.5px;transform-origin:100% 0;top:635px;transform:scaleX(0.9);color:#000;">-4.74</div>
<div class="abs t12" style="right:178.5px;transform-origin:100% 0;top:635px;transform:scaleX(0.9);color:#000;">-63.36</div>
<svg class="abs" style="left:793px;top:638px" width="8" height="8"><path d="M0.8 0.8 L7.2 7.2 M7.2 0.8 L0.8 7.2" stroke="#8c8c8c" stroke-width="1.7"/></svg>
<div class="abs t12" style="right:5.7999999999999545px;transform-origin:100% 0;top:635px;transform:scaleX(0.97);color:#000;">IlanisMT5, 1004, 6</div>
<div class="abs" style="left:16px;top:652px;width:945px;height:19px;background:#ececec"></div>
<div class="abs" style="left:16px;top:671px;width:945px;height:1px;background:#d0d0d0"></div>
<div class="abs" style="left:102px;top:652px;width:1px;height:19px;background:#d0d0d0"></div>
<div class="abs" style="left:162px;top:652px;width:1px;height:19px;background:#d0d0d0"></div>
<div class="abs" style="left:263px;top:652px;width:1px;height:19px;background:#d0d0d0"></div>
<div class="abs" style="left:330px;top:652px;width:1px;height:19px;background:#d0d0d0"></div>
<div class="abs" style="left:397px;top:652px;width:1px;height:19px;background:#d0d0d0"></div>
<div class="abs" style="left:464px;top:652px;width:1px;height:19px;background:#d0d0d0"></div>
<div class="abs" style="left:531px;top:652px;width:1px;height:19px;background:#d0d0d0"></div>
<div class="abs" style="left:598px;top:652px;width:1px;height:19px;background:#d0d0d0"></div>
<div class="abs" style="left:665px;top:652px;width:1px;height:19px;background:#d0d0d0"></div>
<div class="abs" style="left:732px;top:652px;width:1px;height:19px;background:#d0d0d0"></div>
<div class="abs" style="left:806px;top:652px;width:1px;height:19px;background:#d0d0d0"></div>
<svg class="abs" style="left:18px;top:653px" width="13" height="17" viewBox="0 0 13 17"><path d="M1.4 0.6 H10.6 Q11.4 0.6 11.4 1.4 V10.8 L6.8 15.4 H1.4 Q0.6 15.4 0.6 14.6 V1.4 Q0.6 0.6 1.4 0.6 Z" fill="#fff" stroke="#1f7dc4" stroke-width="1.25"/><path d="M2.2 2.2 H9.8 V10 H6.5 V13.8 H2.2 Z" fill="#c4dcf8"/><path d="M3 4.4 H9 M3 7.5 H9" stroke="#3a8cc8" stroke-width="1"/><path d="M6.6 10.6 H11.6 L6.6 15.6 Z" fill="#1f70b8"/></svg>
<div class="abs t12" style="left:37px;transform-origin:0 0;top:655px;color:#000;">eurusd</div>
<div class="abs t12" style="left:106px;transform-origin:0 0;top:655px;transform:scaleX(0.9);color:#000;">1015822...</div>
<div class="abs t12" style="left:166.5px;transform-origin:0 0;top:655px;transform:scaleX(0.9);color:#000;">2019.02.06 17:25...</div>
<div class="abs t12" style="right:635.5px;transform-origin:100% 0;top:655px;color:#000;">buy</div>
<div class="abs t12" style="right:568.5px;transform-origin:100% 0;top:655px;transform:scaleX(0.9);color:#000;">0.11</div>
<div class="abs t12" style="right:501.7px;transform-origin:100% 0;top:655px;transform:scaleX(0.9);color:#000;">1.13862</div>
<div class="abs t12" style="right:434.79999999999995px;transform-origin:100% 0;top:655px;transform:scaleX(0.9);color:#000;">0.00000</div>
<div class="abs t12" style="right:368.20000000000005px;transform-origin:100% 0;top:655px;transform:scaleX(0.9);color:#000;">0.00000</div>
<div class="abs t12" style="right:300.70000000000005px;transform-origin:100% 0;top:655px;transform:scaleX(0.9);color:#000;">1.13073</div>
<div class="abs t12" style="right:233.5px;transform-origin:100% 0;top:655px;transform:scaleX(0.9);color:#000;">-6.51</div>
<div class="abs t12" style="right:178.5px;transform-origin:100% 0;top:655px;transform:scaleX(0.9);color:#000;">-86.79</div>
<svg class="abs" style="left:793px;top:658px" width="8" height="8"><path d="M0.8 0.8 L7.2 7.2 M7.2 0.8 L0.8 7.2" stroke="#8c8c8c" stroke-width="1.7"/></svg>
<div class="abs t12" style="right:5.7999999999999545px;transform-origin:100% 0;top:655px;transform:scaleX(0.97);color:#000;">IlanisMT5, 1005, 6</div>
<div class="abs" style="left:16px;top:672px;width:945px;height:19px;background:#fff"></div>
<div class="abs" style="left:16px;top:691px;width:945px;height:1px;background:#d0d0d0"></div>
<div class="abs" style="left:102px;top:672px;width:1px;height:19px;background:#d0d0d0"></div>
<div class="abs" style="left:162px;top:672px;width:1px;height:19px;background:#d0d0d0"></div>
<div class="abs" style="left:263px;top:672px;width:1px;height:19px;background:#d0d0d0"></div>
<div class="abs" style="left:330px;top:672px;width:1px;height:19px;background:#d0d0d0"></div>
<div class="abs" style="left:397px;top:672px;width:1px;height:19px;background:#d0d0d0"></div>
<div class="abs" style="left:464px;top:672px;width:1px;height:19px;background:#d0d0d0"></div>
<div class="abs" style="left:531px;top:672px;width:1px;height:19px;background:#d0d0d0"></div>
<div class="abs" style="left:598px;top:672px;width:1px;height:19px;background:#d0d0d0"></div>
<div class="abs" style="left:665px;top:672px;width:1px;height:19px;background:#d0d0d0"></div>
<div class="abs" style="left:732px;top:672px;width:1px;height:19px;background:#d0d0d0"></div>
<div class="abs" style="left:806px;top:672px;width:1px;height:19px;background:#d0d0d0"></div>
<svg class="abs" style="left:18px;top:673px" width="13" height="17" viewBox="0 0 13 17"><path d="M1.4 0.6 H10.6 Q11.4 0.6 11.4 1.4 V10.8 L6.8 15.4 H1.4 Q0.6 15.4 0.6 14.6 V1.4 Q0.6 0.6 1.4 0.6 Z" fill="#fff" stroke="#1f7dc4" stroke-width="1.25"/><path d="M2.2 2.2 H9.8 V10 H6.5 V13.8 H2.2 Z" fill="#c4dcf8"/><path d="M3 4.4 H9 M3 7.5 H9" stroke="#3a8cc8" stroke-width="1"/><path d="M6.6 10.6 H11.6 L6.6 15.6 Z" fill="#1f70b8"/></svg>
<div class="abs t12" style="left:37px;transform-origin:0 0;top:675px;color:#000;">eurusd</div>
<div class="abs t12" style="left:106px;transform-origin:0 0;top:675px;transform:scaleX(0.9);color:#000;">1015824...</div>
<div class="abs t12" style="left:166.5px;transform-origin:0 0;top:675px;transform:scaleX(0.9);color:#000;">2019.02.06 19:05...</div>
<div class="abs t12" style="right:635.5px;transform-origin:100% 0;top:675px;color:#000;">buy</div>
<div class="abs t12" style="right:568.5px;transform-origin:100% 0;top:675px;transform:scaleX(0.9);color:#000;">0.16</div>
<div class="abs t12" style="right:501.7px;transform-origin:100% 0;top:675px;transform:scaleX(0.9);color:#000;">1.13810</div>
<div class="abs t12" style="right:434.79999999999995px;transform-origin:100% 0;top:675px;transform:scaleX(0.9);color:#000;">0.00000</div>
<div class="abs t12" style="right:368.20000000000005px;transform-origin:100% 0;top:675px;transform:scaleX(0.9);color:#000;">0.00000</div>
<div class="abs t12" style="right:300.70000000000005px;transform-origin:100% 0;top:675px;transform:scaleX(0.9);color:#000;">1.13073</div>
<div class="abs t12" style="right:233.5px;transform-origin:100% 0;top:675px;transform:scaleX(0.9);color:#000;">-9.46</div>
<div class="abs t12" style="right:178.5px;transform-origin:100% 0;top:675px;transform:scaleX(0.9);color:#000;">-117.92</div>
<svg class="abs" style="left:793px;top:678px" width="8" height="8"><path d="M0.8 0.8 L7.2 7.2 M7.2 0.8 L0.8 7.2" stroke="#8c8c8c" stroke-width="1.7"/></svg>
<div class="abs t12" style="right:5.7999999999999545px;transform-origin:100% 0;top:675px;transform:scaleX(0.97);color:#000;">IlanisMT5, 1006, 6</div>
<div class="abs" style="left:16px;top:692px;width:945px;height:19px;background:#ececec"></div>
<div class="abs" style="left:16px;top:711px;width:945px;height:1px;background:#d0d0d0"></div>
<div class="abs" style="left:102px;top:692px;width:1px;height:19px;background:#d0d0d0"></div>
<div class="abs" style="left:162px;top:692px;width:1px;height:19px;background:#d0d0d0"></div>
<div class="abs" style="left:263px;top:692px;width:1px;height:19px;background:#d0d0d0"></div>
<div class="abs" style="left:330px;top:692px;width:1px;height:19px;background:#d0d0d0"></div>
<div class="abs" style="left:397px;top:692px;width:1px;height:19px;background:#d0d0d0"></div>
<div class="abs" style="left:464px;top:692px;width:1px;height:19px;background:#d0d0d0"></div>
<div class="abs" style="left:531px;top:692px;width:1px;height:19px;background:#d0d0d0"></div>
<div class="abs" style="left:598px;top:692px;width:1px;height:19px;background:#d0d0d0"></div>
<div class="abs" style="left:665px;top:692px;width:1px;height:19px;background:#d0d0d0"></div>
<div class="abs" style="left:732px;top:692px;width:1px;height:19px;background:#d0d0d0"></div>
<div class="abs" style="left:806px;top:692px;width:1px;height:19px;background:#d0d0d0"></div>
<svg class="abs" style="left:18px;top:693px" width="13" height="17" viewBox="0 0 13 17"><path d="M1.4 0.6 H10.6 Q11.4 0.6 11.4 1.4 V10.8 L6.8 15.4 H1.4 Q0.6 15.4 0.6 14.6 V1.4 Q0.6 0.6 1.4 0.6 Z" fill="#fff" stroke="#1f7dc4" stroke-width="1.25"/><path d="M2.2 2.2 H9.8 V10 H6.5 V13.8 H2.2 Z" fill="#c4dcf8"/><path d="M3 4.4 H9 M3 7.5 H9" stroke="#3a8cc8" stroke-width="1"/><path d="M6.6 10.6 H11.6 L6.6 15.6 Z" fill="#1f70b8"/></svg>
<div class="abs t12" style="left:37px;transform-origin:0 0;top:695px;color:#000;">eurusd</div>
<div class="abs t12" style="left:106px;transform-origin:0 0;top:695px;transform:scaleX(0.9);color:#000;">1015826...</div>
<div class="abs t12" style="left:166.5px;transform-origin:0 0;top:695px;transform:scaleX(0.9);color:#000;">2019.02.06 22:00...</div>
<div class="abs t12" style="right:635.5px;transform-origin:100% 0;top:695px;color:#000;">buy</div>
<div class="abs t12" style="right:568.5px;transform-origin:100% 0;top:695px;transform:scaleX(0.9);color:#000;">0.22</div>
<div class="abs t12" style="right:501.7px;transform-origin:100% 0;top:695px;transform:scaleX(0.9);color:#000;">1.13642</div>
<div class="abs t12" style="right:434.79999999999995px;transform-origin:100% 0;top:695px;transform:scaleX(0.9);color:#000;">0.00000</div>
<div class="abs t12" style="right:368.20000000000005px;transform-origin:100% 0;top:695px;transform:scaleX(0.9);color:#000;">0.00000</div>
<div class="abs t12" style="right:300.70000000000005px;transform-origin:100% 0;top:695px;transform:scaleX(0.9);color:#000;">1.13073</div>
<div class="abs t12" style="right:233.5px;transform-origin:100% 0;top:695px;transform:scaleX(0.9);color:#000;">-13.01</div>
<div class="abs t12" style="right:178.5px;transform-origin:100% 0;top:695px;transform:scaleX(0.9);color:#000;">-125.18</div>
<svg class="abs" style="left:793px;top:698px" width="8" height="8"><path d="M0.8 0.8 L7.2 7.2 M7.2 0.8 L0.8 7.2" stroke="#8c8c8c" stroke-width="1.7"/></svg>
<div class="abs t12" style="right:5.7999999999999545px;transform-origin:100% 0;top:695px;transform:scaleX(0.97);color:#000;">IlanisMT5, 1007, 6</div>
<div class="abs" style="left:16px;top:712px;width:945px;height:19px;background:#fff"></div>
<div class="abs" style="left:16px;top:731px;width:945px;height:1px;background:#d0d0d0"></div>
<div class="abs" style="left:102px;top:712px;width:1px;height:19px;background:#d0d0d0"></div>
<div class="abs" style="left:162px;top:712px;width:1px;height:19px;background:#d0d0d0"></div>
<div class="abs" style="left:263px;top:712px;width:1px;height:19px;background:#d0d0d0"></div>
<div class="abs" style="left:330px;top:712px;width:1px;height:19px;background:#d0d0d0"></div>
<div class="abs" style="left:397px;top:712px;width:1px;height:19px;background:#d0d0d0"></div>
<div class="abs" style="left:464px;top:712px;width:1px;height:19px;background:#d0d0d0"></div>
<div class="abs" style="left:531px;top:712px;width:1px;height:19px;background:#d0d0d0"></div>
<div class="abs" style="left:598px;top:712px;width:1px;height:19px;background:#d0d0d0"></div>
<div class="abs" style="left:665px;top:712px;width:1px;height:19px;background:#d0d0d0"></div>
<div class="abs" style="left:732px;top:712px;width:1px;height:19px;background:#d0d0d0"></div>
<div class="abs" style="left:806px;top:712px;width:1px;height:19px;background:#d0d0d0"></div>
<svg class="abs" style="left:18px;top:713px" width="13" height="17" viewBox="0 0 13 17"><path d="M1.4 0.6 H10.6 Q11.4 0.6 11.4 1.4 V10.8 L6.8 15.4 H1.4 Q0.6 15.4 0.6 14.6 V1.4 Q0.6 0.6 1.4 0.6 Z" fill="#fff" stroke="#1f7dc4" stroke-width="1.25"/><path d="M2.2 2.2 H9.8 V10 H6.5 V13.8 H2.2 Z" fill="#c4dcf8"/><path d="M3 4.4 H9 M3 7.5 H9" stroke="#3a8cc8" stroke-width="1"/><path d="M6.6 10.6 H11.6 L6.6 15.6 Z" fill="#1f70b8"/></svg>
<div class="abs t12" style="left:37px;transform-origin:0 0;top:715px;color:#000;">eurusd</div>
<div class="abs t12" style="left:106px;transform-origin:0 0;top:715px;transform:scaleX(0.9);color:#000;">1015828...</div>
<div class="abs t12" style="left:166.5px;transform-origin:0 0;top:715px;transform:scaleX(0.9);color:#000;">2019.02.07 00:30...</div>
<div class="abs t12" style="right:635.5px;transform-origin:100% 0;top:715px;color:#000;">buy</div>
<div class="abs t12" style="right:568.5px;transform-origin:100% 0;top:715px;transform:scaleX(0.9);color:#000;">0.31</div>
<div class="abs t12" style="right:501.7px;transform-origin:100% 0;top:715px;transform:scaleX(0.9);color:#000;">1.13639</div>
<div class="abs t12" style="right:434.79999999999995px;transform-origin:100% 0;top:715px;transform:scaleX(0.9);color:#000;">0.00000</div>
<div class="abs t12" style="right:368.20000000000005px;transform-origin:100% 0;top:715px;transform:scaleX(0.9);color:#000;">0.00000</div>
<div class="abs t12" style="right:300.70000000000005px;transform-origin:100% 0;top:715px;transform:scaleX(0.9);color:#000;">1.13073</div>
<div class="abs t12" style="right:233.5px;transform-origin:100% 0;top:715px;transform:scaleX(0.9);color:#000;">-7.32</div>
<div class="abs t12" style="right:178.5px;transform-origin:100% 0;top:715px;transform:scaleX(0.9);color:#000;">-175.46</div>
<svg class="abs" style="left:793px;top:718px" width="8" height="8"><path d="M0.8 0.8 L7.2 7.2 M7.2 0.8 L0.8 7.2" stroke="#8c8c8c" stroke-width="1.7"/></svg>
<div class="abs t12" style="right:5.7999999999999545px;transform-origin:100% 0;top:715px;transform:scaleX(0.97);color:#000;">IlanisMT5, 1008, 8</div>
<div class="abs" style="left:16px;top:732px;width:945px;height:19px;background:#ececec"></div>
<div class="abs" style="left:16px;top:751px;width:945px;height:1px;background:#d0d0d0"></div>
<div class="abs" style="left:102px;top:732px;width:1px;height:19px;background:#d0d0d0"></div>
<div class="abs" style="left:162px;top:732px;width:1px;height:19px;background:#d0d0d0"></div>
<div class="abs" style="left:263px;top:732px;width:1px;height:19px;background:#d0d0d0"></div>
<div class="abs" style="left:330px;top:732px;width:1px;height:19px;background:#d0d0d0"></div>
<div class="abs" style="left:397px;top:732px;width:1px;height:19px;background:#d0d0d0"></div>
<div class="abs" style="left:464px;top:732px;width:1px;height:19px;background:#d0d0d0"></div>
<div class="abs" style="left:531px;top:732px;width:1px;height:19px;background:#d0d0d0"></div>
<div class="abs" style="left:598px;top:732px;width:1px;height:19px;background:#d0d0d0"></div>
<div class="abs" style="left:665px;top:732px;width:1px;height:19px;background:#d0d0d0"></div>
<div class="abs" style="left:732px;top:732px;width:1px;height:19px;background:#d0d0d0"></div>
<div class="abs" style="left:806px;top:732px;width:1px;height:19px;background:#d0d0d0"></div>
<svg class="abs" style="left:18px;top:733px" width="13" height="17" viewBox="0 0 13 17"><path d="M1.4 0.6 H10.6 Q11.4 0.6 11.4 1.4 V10.8 L6.8 15.4 H1.4 Q0.6 15.4 0.6 14.6 V1.4 Q0.6 0.6 1.4 0.6 Z" fill="#fff" stroke="#1f7dc4" stroke-width="1.25"/><path d="M2.2 2.2 H9.8 V10 H6.5 V13.8 H2.2 Z" fill="#c4dcf8"/><path d="M3 4.4 H9 M3 7.5 H9" stroke="#3a8cc8" stroke-width="1"/><path d="M6.6 10.6 H11.6 L6.6 15.6 Z" fill="#1f70b8"/></svg>
<div class="abs t12" style="left:37px;transform-origin:0 0;top:735px;color:#000;">eurusd</div>
<div class="abs t12" style="left:106px;transform-origin:0 0;top:735px;transform:scaleX(0.9);color:#000;">1015829...</div>
<div class="abs t12" style="left:166.5px;transform-origin:0 0;top:735px;transform:scaleX(0.9);color:#000;">2019.02.07 04:50...</div>
<div class="abs t12" style="right:635.5px;transform-origin:100% 0;top:735px;color:#000;">buy</div>
<div class="abs t12" style="right:568.5px;transform-origin:100% 0;top:735px;transform:scaleX(0.9);color:#000;">0.44</div>
<div class="abs t12" style="right:501.7px;transform-origin:100% 0;top:735px;transform:scaleX(0.9);color:#000;">1.13625</div>
<div class="abs t12" style="right:434.79999999999995px;transform-origin:100% 0;top:735px;transform:scaleX(0.9);color:#000;">0.00000</div>
<div class="abs t12" style="right:368.20000000000005px;transform-origin:100% 0;top:735px;transform:scaleX(0.9);color:#000;">0.00000</div>
<div class="abs t12" style="right:300.70000000000005px;transform-origin:100% 0;top:735px;transform:scaleX(0.9);color:#000;">1.13073</div>
<div class="abs t12" style="right:233.5px;transform-origin:100% 0;top:735px;transform:scaleX(0.9);color:#000;">-10.40</div>
<div class="abs t12" style="right:178.5px;transform-origin:100% 0;top:735px;transform:scaleX(0.9);color:#000;">-242.88</div>
<svg class="abs" style="left:793px;top:738px" width="8" height="8"><path d="M0.8 0.8 L7.2 7.2 M7.2 0.8 L0.8 7.2" stroke="#8c8c8c" stroke-width="1.7"/></svg>
<div class="abs t12" style="right:5.7999999999999545px;transform-origin:100% 0;top:735px;transform:scaleX(0.97);color:#000;">IlanisMT5, 1009, 6</div>
<div class="abs" style="left:16px;top:752px;width:945px;height:19px;background:#fff"></div>
<div class="abs" style="left:16px;top:771px;width:945px;height:1px;background:#d0d0d0"></div>
<div class="abs" style="left:102px;top:752px;width:1px;height:19px;background:#d0d0d0"></div>
<div class="abs" style="left:162px;top:752px;width:1px;height:19px;background:#d0d0d0"></div>
<div class="abs" style="left:263px;top:752px;width:1px;height:19px;background:#d0d0d0"></div>
<div class="abs" style="left:330px;top:752px;width:1px;height:19px;background:#d0d0d0"></div>
<div class="abs" style="left:397px;top:752px;width:1px;height:19px;background:#d0d0d0"></div>
<div class="abs" style="left:464px;top:752px;width:1px;height:19px;background:#d0d0d0"></div>
<div class="abs" style="left:531px;top:752px;width:1px;height:19px;background:#d0d0d0"></div>
<div class="abs" style="left:598px;top:752px;width:1px;height:19px;background:#d0d0d0"></div>
<div class="abs" style="left:665px;top:752px;width:1px;height:19px;background:#d0d0d0"></div>
<div class="abs" style="left:732px;top:752px;width:1px;height:19px;background:#d0d0d0"></div>
<div class="abs" style="left:806px;top:752px;width:1px;height:19px;background:#d0d0d0"></div>
<svg class="abs" style="left:18px;top:753px" width="13" height="17" viewBox="0 0 13 17"><path d="M1.4 0.6 H10.6 Q11.4 0.6 11.4 1.4 V10.8 L6.8 15.4 H1.4 Q0.6 15.4 0.6 14.6 V1.4 Q0.6 0.6 1.4 0.6 Z" fill="#fff" stroke="#1f7dc4" stroke-width="1.25"/><path d="M2.2 2.2 H9.8 V10 H6.5 V13.8 H2.2 Z" fill="#c4dcf8"/><path d="M3 4.4 H9 M3 7.5 H9" stroke="#3a8cc8" stroke-width="1"/><path d="M6.6 10.6 H11.6 L6.6 15.6 Z" fill="#1f70b8"/></svg>
<div class="abs t12" style="left:37px;transform-origin:0 0;top:755px;color:#000;">eurusd</div>
<div class="abs t12" style="left:106px;transform-origin:0 0;top:755px;transform:scaleX(0.9);color:#000;">1015830...</div>
<div class="abs t12" style="left:166.5px;transform-origin:0 0;top:755px;transform:scaleX(0.9);color:#000;">2019.02.07 07:00...</div>
<div class="abs t12" style="right:635.5px;transform-origin:100% 0;top:755px;color:#000;">buy</div>
<div class="abs t12" style="right:568.5px;transform-origin:100% 0;top:755px;transform:scaleX(0.9);color:#000;">0.61</div>
<div class="abs t12" style="right:501.7px;transform-origin:100% 0;top:755px;transform:scaleX(0.9);color:#000;">1.13626</div>
<div class="abs t12" style="right:434.79999999999995px;transform-origin:100% 0;top:755px;transform:scaleX(0.9);color:#000;">0.00000</div>
<div class="abs t12" style="right:368.20000000000005px;transform-origin:100% 0;top:755px;transform:scaleX(0.9);color:#000;">0.00000</div>
<div class="abs t12" style="right:300.70000000000005px;transform-origin:100% 0;top:755px;transform:scaleX(0.9);color:#000;">1.13073</div>
<div class="abs t12" style="right:233.5px;transform-origin:100% 0;top:755px;transform:scaleX(0.9);color:#000;">-14.42</div>
<div class="abs t12" style="right:178.5px;transform-origin:100% 0;top:755px;transform:scaleX(0.9);color:#000;">-337.33</div>
<svg class="abs" style="left:793px;top:758px" width="8" height="8"><path d="M0.8 0.8 L7.2 7.2 M7.2 0.8 L0.8 7.2" stroke="#8c8c8c" stroke-width="1.7"/></svg>
<div class="abs t12" style="right:5.7999999999999545px;transform-origin:100% 0;top:755px;transform:scaleX(0.97);color:#000;">IlanisMT5, 1010, 5</div>
<div class="abs" style="left:16px;top:772px;width:945px;height:19px;background:#ececec"></div>
<div class="abs" style="left:16px;top:791px;width:945px;height:1px;background:#d0d0d0"></div>
<div class="abs" style="left:102px;top:772px;width:1px;height:19px;background:#d0d0d0"></div>
<div class="abs" style="left:162px;top:772px;width:1px;height:19px;background:#d0d0d0"></div>
<div class="abs" style="left:263px;top:772px;width:1px;height:19px;background:#d0d0d0"></div>
<div class="abs" style="left:330px;top:772px;width:1px;height:19px;background:#d0d0d0"></div>
<div class="abs" style="left:397px;top:772px;width:1px;height:19px;background:#d0d0d0"></div>
<div class="abs" style="left:464px;top:772px;width:1px;height:19px;background:#d0d0d0"></div>
<div class="abs" style="left:531px;top:772px;width:1px;height:19px;background:#d0d0d0"></div>
<div class="abs" style="left:598px;top:772px;width:1px;height:19px;background:#d0d0d0"></div>
<div class="abs" style="left:665px;top:772px;width:1px;height:19px;background:#d0d0d0"></div>
<div class="abs" style="left:732px;top:772px;width:1px;height:19px;background:#d0d0d0"></div>
<div class="abs" style="left:806px;top:772px;width:1px;height:19px;background:#d0d0d0"></div>
<svg class="abs" style="left:18px;top:773px" width="13" height="17" viewBox="0 0 13 17"><path d="M1.4 0.6 H10.6 Q11.4 0.6 11.4 1.4 V10.8 L6.8 15.4 H1.4 Q0.6 15.4 0.6 14.6 V1.4 Q0.6 0.6 1.4 0.6 Z" fill="#fff" stroke="#1f7dc4" stroke-width="1.25"/><path d="M2.2 2.2 H9.8 V10 H6.5 V13.8 H2.2 Z" fill="#c4dcf8"/><path d="M3 4.4 H9 M3 7.5 H9" stroke="#3a8cc8" stroke-width="1"/><path d="M6.6 10.6 H11.6 L6.6 15.6 Z" fill="#1f70b8"/></svg>
<div class="abs t12" style="left:37px;transform-origin:0 0;top:775px;color:#000;">eurusd</div>
<div class="abs t12" style="left:106px;transform-origin:0 0;top:775px;transform:scaleX(0.9);color:#000;">1015831...</div>
<div class="abs t12" style="left:166.5px;transform-origin:0 0;top:775px;transform:scaleX(0.9);color:#000;">2019.02.07 08:35...</div>
<div class="abs t12" style="right:635.5px;transform-origin:100% 0;top:775px;color:#000;">buy</div>
<div class="abs t12" style="right:568.5px;transform-origin:100% 0;top:775px;transform:scaleX(0.9);color:#000;">0.86</div>
<div class="abs t12" style="right:501.7px;transform-origin:100% 0;top:775px;transform:scaleX(0.9);color:#000;">1.13624</div>
<div class="abs t12" style="right:434.79999999999995px;transform-origin:100% 0;top:775px;transform:scaleX(0.9);color:#000;">0.00000</div>
<div class="abs t12" style="right:368.20000000000005px;transform-origin:100% 0;top:775px;transform:scaleX(0.9);color:#000;">0.00000</div>
<div class="abs t12" style="right:300.70000000000005px;transform-origin:100% 0;top:775px;transform:scaleX(0.9);color:#000;">1.13073</div>
<div class="abs t12" style="right:233.5px;transform-origin:100% 0;top:775px;transform:scaleX(0.9);color:#000;">-20.34</div>
<div class="abs t12" style="right:178.5px;transform-origin:100% 0;top:775px;transform:scaleX(0.9);color:#000;">-473.86</div>
<svg class="abs" style="left:793px;top:778px" width="8" height="8"><path d="M0.8 0.8 L7.2 7.2 M7.2 0.8 L0.8 7.2" stroke="#8c8c8c" stroke-width="1.7"/></svg>
<div class="abs t12" style="right:5.7999999999999545px;transform-origin:100% 0;top:775px;transform:scaleX(0.97);color:#000;">IlanisMT5, 1011, 5</div>
<div class="abs" style="left:16px;top:792px;width:945px;height:19px;background:#3399ff"></div>
<div class="abs" style="left:16px;top:811px;width:945px;height:1px;background:#d0d0d0"></div>
<div class="abs" style="left:102px;top:792px;width:1px;height:19px;background:#d0d0d0"></div>
<div class="abs" style="left:162px;top:792px;width:1px;height:19px;background:#d0d0d0"></div>
<div class="abs" style="left:263px;top:792px;width:1px;height:19px;background:#d0d0d0"></div>
<div class="abs" style="left:330px;top:792px;width:1px;height:19px;background:#d0d0d0"></div>
<div class="abs" style="left:397px;top:792px;width:1px;height:19px;background:#d0d0d0"></div>
<div class="abs" style="left:464px;top:792px;width:1px;height:19px;background:#d0d0d0"></div>
<div class="abs" style="left:531px;top:792px;width:1px;height:19px;background:#d0d0d0"></div>
<div class="abs" style="left:598px;top:792px;width:1px;height:19px;background:#d0d0d0"></div>
<div class="abs" style="left:665px;top:792px;width:1px;height:19px;background:#d0d0d0"></div>
<div class="abs" style="left:732px;top:792px;width:1px;height:19px;background:#d0d0d0"></div>
<div class="abs" style="left:806px;top:792px;width:1px;height:19px;background:#d0d0d0"></div>
<svg class="abs" style="left:18px;top:793px" width="13" height="17" viewBox="0 0 13 17"><path d="M1.4 0.6 H10.6 Q11.4 0.6 11.4 1.4 V10.8 L6.8 15.4 H1.4 Q0.6 15.4 0.6 14.6 V1.4 Q0.6 0.6 1.4 0.6 Z" fill="#fff" stroke="#1f7dc4" stroke-width="1.25"/><path d="M2.2 2.2 H9.8 V10 H6.5 V13.8 H2.2 Z" fill="#c4dcf8"/><path d="M3 4.4 H9 M3 7.5 H9" stroke="#3a8cc8" stroke-width="1"/><path d="M6.6 10.6 H11.6 L6.6 15.6 Z" fill="#1f70b8"/></svg>
<div class="abs t12" style="left:37px;transform-origin:0 0;top:795px;color:#fff;">eurusd</div>
<div class="abs t12" style="left:106px;transform-origin:0 0;top:795px;transform:scaleX(0.9);color:#fff;">1015833...</div>
<div class="abs t12" style="left:166.5px;transform-origin:0 0;top:795px;transform:scaleX(0.9);color:#fff;">2019.02.07 10:40...</div>
<div class="abs t12" style="right:635.5px;transform-origin:100% 0;top:795px;color:#fff;">buy</div>
<div class="abs t12" style="right:568.5px;transform-origin:100% 0;top:795px;transform:scaleX(0.9);color:#fff;">1.21</div>
<div class="abs t12" style="right:501.7px;transform-origin:100% 0;top:795px;transform:scaleX(0.9);color:#fff;">1.13526</div>
<div class="abs t12" style="right:434.79999999999995px;transform-origin:100% 0;top:795px;transform:scaleX(0.9);color:#fff;">0.00000</div>
<div class="abs t12" style="right:368.20000000000005px;transform-origin:100% 0;top:795px;transform:scaleX(0.9);color:#fff;">0.00000</div>
<div class="abs t12" style="right:300.70000000000005px;transform-origin:100% 0;top:795px;transform:scaleX(0.9);color:#fff;">1.13073</div>
<div class="abs t12" style="right:233.5px;transform-origin:100% 0;top:795px;transform:scaleX(0.9);color:#fff;">-28.60</div>
<div class="abs t12" style="right:178.5px;transform-origin:100% 0;top:795px;transform:scaleX(0.9);color:#fff;">-548.13</div>
<svg class="abs" style="left:793px;top:798px" width="8" height="8"><path d="M0.8 0.8 L7.2 7.2 M7.2 0.8 L0.8 7.2" stroke="#b8d4f4" stroke-width="1.7"/></svg>
<div class="abs t12" style="right:5.7999999999999545px;transform-origin:100% 0;top:795px;transform:scaleX(0.97);color:#fff;">IlanisMT5, 1012, 6</div>
<div class="abs" style="left:16px;top:812px;width:945px;height:20px;background:#c8c8c8"></div>
<svg class="abs" style="left:17px;top:815px" width="14" height="14" viewBox="0 0 14 14"><circle cx="7" cy="7" r="5.5" fill="none" stroke="#303030" stroke-width="1.3"/><rect x="4" y="6.4" width="6" height="1.3" fill="#303030"/></svg>
<div class="abs t12" style="left:37.5px;transform-origin:0 0;top:814px;transform:scaleX(0.95);color:#000;font-weight:bold">Balance: 3 970.91 USD</div>
<div class="abs t12" style="left:168.5px;transform-origin:0 0;top:814px;transform:scaleX(0.95);color:#000;font-weight:bold">Equity: 1 528.84</div>
<div class="abs t12" style="left:262.5px;transform-origin:0 0;top:814px;transform:scaleX(0.95);color:#000;font-weight:bold">Margin: 471.57</div>
<div class="abs t12" style="left:351.5px;transform-origin:0 0;top:814px;transform:scaleX(0.95);color:#000;font-weight:bold">Free Margin: 1 057.27</div>
<div class="abs t12" style="left:478.5px;transform-origin:0 0;top:814px;transform:scaleX(0.95);color:#000;font-weight:bold">Margin Level: 324.20 %</div>
<div class="abs t12" style="right:178px;transform-origin:100% 0;top:814px;transform:scaleX(0.95);color:#000;font-weight:bold">-2 442....</div>
<div class="abs" style="left:263px;top:729px;width:219px;height:61px;border:3px solid #ff0000;box-shadow:2px 2px 4px rgba(0,0,0,0.55), inset 2px 2px 4px rgba(0,0,0,0.45)"></div>
<svg class="abs" style="left:380px;top:700px;overflow:visible" width="60" height="50"><defs><filter id="sh" x="-50%" y="-50%" width="200%" height="200%"><feGaussianBlur in="SourceAlpha" stdDeviation="2"/><feOffset dx="2" dy="2"/><feComponentTransfer><feFuncA type="linear" slope="0.6"/></feComponentTransfer><feMerge><feMergeNode/><feMergeNode in="SourceGraphic"/></feMerge></filter></defs><polygon filter="url(#sh)" points="17.8,12.5 19.9,11.5 22.7,15.3 25.2,12.2 34.6,36.8 16.2,18.4 20.9,17.1" fill="#ff0000"/></svg>
<!-- tabs -->
<div class="abs" style="left:16px;top:860px;width:945px;height:22px;background:#f0f0f0"></div>
<div class="abs" style="left:16px;top:860px;width:3px;height:1px;background:#000"></div>
<div class="abs" style="left:67px;top:860px;width:894px;height:1px;background:#000"></div>
<div class="abs" style="left:18px;top:860px;width:48px;height:19px;border:1px solid #000;border-top:none;background:#fff"></div>
<div class="tab" style="left:28px;color:#000;letter-spacing:-0.1px">Trade</div>
<div class="tab" style="left:78px">Exposure</div>
<div class="sep" style="left:135px"></div>
<div class="tab" style="left:145px">History</div>
<div class="sep" style="left:193px"></div>
<div class="tab" style="left:203px">News</div>
<div class="sep" style="left:242px"></div>
<div class="tab" style="left:252px">Mailbox</div><div class="sub" style="left:296px">10</div>
<div class="sep" style="left:316px"></div>
<div class="tab" style="left:326px">Company</div>
<div class="sep" style="left:388px"></div>
<div class="tab" style="left:398px">Market</div><div class="sub" style="left:437px">32</div>
<div class="sep" style="left:457px"></div>
<div class="tab" style="left:467px">Alerts</div>
<div class="sep" style="left:507px"></div>
<div class="tab" style="left:517px">Signals</div>
<div class="sep" style="left:564px"></div>
<div class="tab" style="left:574px">Articles</div><div class="sub" style="left:615px">3</div>
<div class="sep" style="left:630px"></div>
<div class="tab" style="left:640px">Code Base</div>
<div class="sep" style="left:705px"></div>
<div class="tab" style="left:715px">Experts</div>
<div class="sep" style="left:762px"></div>
<div class="tab" style="left:771px">Journal</div>
<div class="sep" style="left:820px"></div>
<div class="tab" style="left:868px;color:#000;letter-spacing:-0.3px">Strategy Tester</div>
<!-- status bar -->
<div class="abs" style="left:0;top:885px;width:963px;height:1px;background:#a0a0a0"></div>
<div class="abs" style="left:0;top:886px;width:963px;height:1px;background:#fff"></div>
<div class="st" style="left:2px">For Help, press F1</div>
<div class="ssep" style="left:325px"></div>
<div class="st" style="left:330px;letter-spacing:-0.2px">Default</div>
<div class="ssep" style="left:452px"></div>
<div class="ssep" style="left:550px"></div>
<div class="ssep" style="left:621px"></div>
<div class="ssep" style="left:692px"></div>
<div class="ssep" style="left:761px"></div>
<div class="ssep" style="left:830px"></div>
<div class="ssep" style="left:897px"></div>
<svg class="abs" style="left:901px;top:893px" width="16" height="12" shape-rendering="crispEdges">
<g fill="#22aa22"><rect x="0" y="9" width="2" height="2"/><rect x="3" y="7" width="2" height="4"/><rect x="6" y="5" width="2" height="6"/><rect x="9" y="3" width="2" height="8"/><rect x="12" y="1" width="2" height="10"/></g></svg>
<div class="st" style="left:922px;letter-spacing:-0.2px">76.16 m</div>
</body></html>
